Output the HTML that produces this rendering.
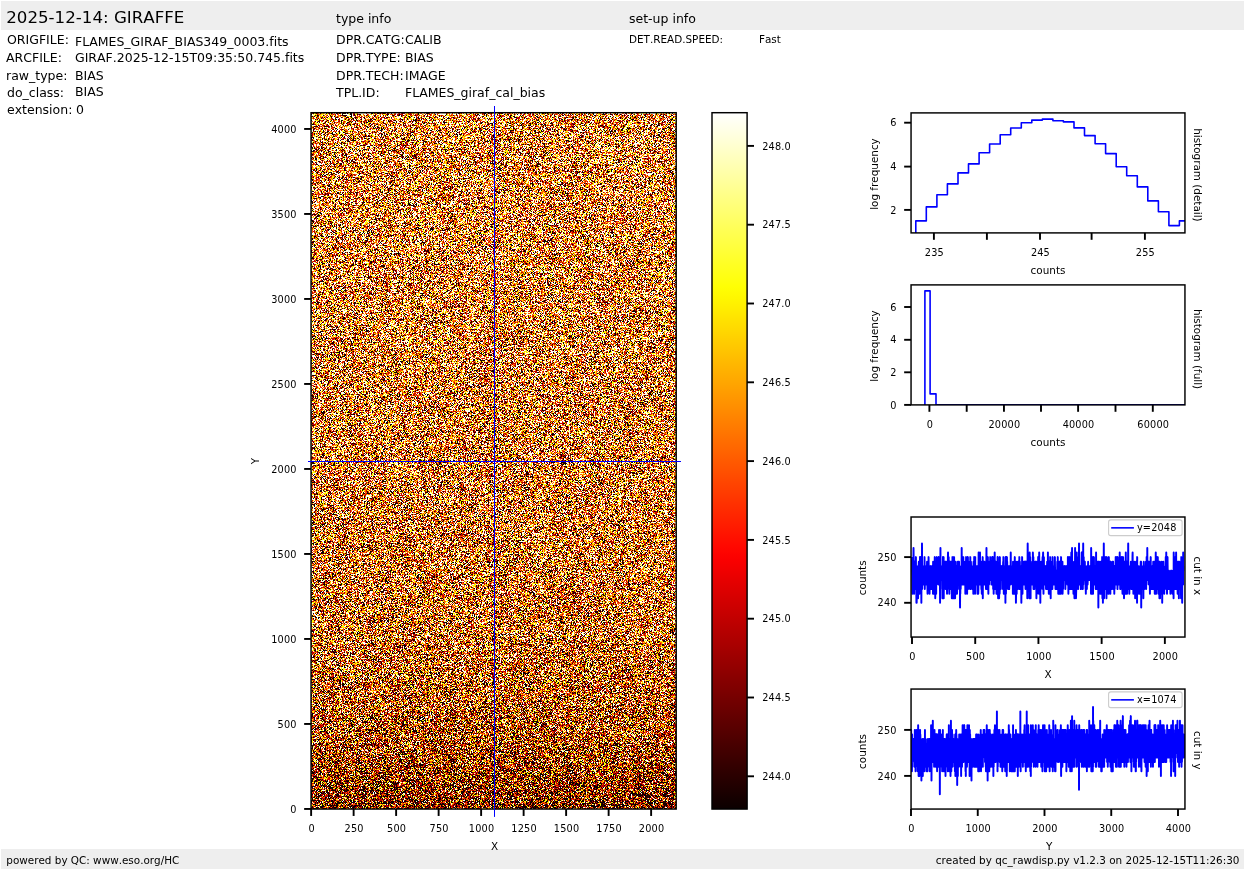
<!DOCTYPE html>
<html lang="en"><head><meta charset="utf-8"><title>2025-12-14: GIRAFFE</title>
<style>html,body{margin:0;padding:0;background:#fff}svg{display:block}text{font-family:'DejaVu Sans','Liberation Sans',sans-serif;fill:#000;white-space:pre;font-kerning:none;font-variant-ligatures:none}</style>
</head><body>
<svg width="1245" height="870" viewBox="0 0 1245 870">
<defs>
<filter id="noise" x="0" y="0" width="1" height="1" color-interpolation-filters="sRGB"><feTurbulence type="fractalNoise" baseFrequency="0.731 0.787" numOctaves="1" seed="11" result="t"/><feColorMatrix in="t" type="matrix" values="1 0 0 0 0  1 0 0 0 0  1 0 0 0 0  0 0 0 0 1" result="n"/><feComponentTransfer in="n" result="w"><feFuncR type="discrete" tableValues="0.593 0.869 0.439 0.582 0.473 0.653 0.582 0.744 0.516 0.248 0.263 0.769 0.643 0.455 0.318 0.328 0.259 0.319 0.104 0.33 0.081 0.582 0.625 0.744 0.438 0.443 0.365 0.306 0.476 1 0.153 0.741 0.582 0.081 0.869 0.439 0.73 0.582 0.634 0.473 0.259 0.624 0.428 0.744 0.443 0.565 0.611 0.052 0.439 0.33 0.105 0.438 0.104 0.655 0.104 0.416 0.365 0.259 0.611 0.831 0.548 0.428 0.624 0.604 0.729 0.582 0.337 0.054 0.223 0.566 0.403 0 0.654 0.109 0.629 0.674 0.626 0.766 0.437 0.481 0.641 0.751 0.613 0.644 0.453 0.363 0.484 0.732 0.632 0.414 0.499 0.794 0.41 0.38 0.42 0.092 0.488 0.737 0.478 0 0.333 0.883 0.525 0.069 0.425 0.806 0.2 0.658 0.65 0.342 0.255 0.504 0.162 0.84 0.779 0.667 0.558 0.459 0.859 0.68 0.235 0.577 0.299 0.599 0.712 0.532 0.922 0.245 0.371 1 0.35 0.724 0.182 0.701 0.467 0.133 0.512 0.54 0.758 0.397 0.277 0.447 0.821 0.69 0.033 0.432 0.621 0.214 0.358 0.607 0.39 0.267 0.551 0.314 0.59 0.637 0.569 0.492 0.585 0.52 0 0.406 0.322 0.546 0.985 0.148 0.747 0.496 0.441 0.959 0.327 0.308 0.288 0.261 0.284 0.475 0.472 0.386 0.616 0.517 0.383 0.292 0.564 0.742 0.744 0.417 0.249 0.318 0.329 0.74 0.439 0 0.362 0.338 0.593 0.625 0.439 0.402 0.63 0.536 0.646 0.769 0.412 0.382 0.325 0.548 0.153 0.604 0.79 0.643 0.749 0.113 0.153 0.655 0.582 0.471 0.378 0.104 0.104 0.33 0.384 0.582 0.338 0.439 0.582 0.113 1 0.582 0.604 1 0.113 0.662 0.153 0.516 0.416 0.221 0.582 0.655 0.548 0.734 0.33 0.672 0.646 0.439 0.79 0.382 0.744 0.655 0.207 0.221 0.483 0.306 0.056 0.869 0.471 0.611"/><feFuncG type="discrete" tableValues="0.593 0.869 0.439 0.582 0.473 0.653 0.582 0.744 0.516 0.248 0.263 0.769 0.643 0.455 0.318 0.328 0.259 0.319 0.104 0.33 0.081 0.582 0.625 0.744 0.438 0.443 0.365 0.306 0.476 1 0.153 0.741 0.582 0.081 0.869 0.439 0.73 0.582 0.634 0.473 0.259 0.624 0.428 0.744 0.443 0.565 0.611 0.052 0.439 0.33 0.105 0.438 0.104 0.655 0.104 0.416 0.365 0.259 0.611 0.831 0.548 0.428 0.624 0.604 0.729 0.582 0.337 0.054 0.223 0.566 0.403 0 0.654 0.109 0.629 0.674 0.626 0.766 0.437 0.481 0.641 0.751 0.613 0.644 0.453 0.363 0.484 0.732 0.632 0.414 0.499 0.794 0.41 0.38 0.42 0.092 0.488 0.737 0.478 0 0.333 0.883 0.525 0.069 0.425 0.806 0.2 0.658 0.65 0.342 0.255 0.504 0.162 0.84 0.779 0.667 0.558 0.459 0.859 0.68 0.235 0.577 0.299 0.599 0.712 0.532 0.922 0.245 0.371 1 0.35 0.724 0.182 0.701 0.467 0.133 0.512 0.54 0.758 0.397 0.277 0.447 0.821 0.69 0.033 0.432 0.621 0.214 0.358 0.607 0.39 0.267 0.551 0.314 0.59 0.637 0.569 0.492 0.585 0.52 0 0.406 0.322 0.546 0.985 0.148 0.747 0.496 0.441 0.959 0.327 0.308 0.288 0.261 0.284 0.475 0.472 0.386 0.616 0.517 0.383 0.292 0.564 0.742 0.744 0.417 0.249 0.318 0.329 0.74 0.439 0 0.362 0.338 0.593 0.625 0.439 0.402 0.63 0.536 0.646 0.769 0.412 0.382 0.325 0.548 0.153 0.604 0.79 0.643 0.749 0.113 0.153 0.655 0.582 0.471 0.378 0.104 0.104 0.33 0.384 0.582 0.338 0.439 0.582 0.113 1 0.582 0.604 1 0.113 0.662 0.153 0.516 0.416 0.221 0.582 0.655 0.548 0.734 0.33 0.672 0.646 0.439 0.79 0.382 0.744 0.655 0.207 0.221 0.483 0.306 0.056 0.869 0.471 0.611"/><feFuncB type="discrete" tableValues="0.593 0.869 0.439 0.582 0.473 0.653 0.582 0.744 0.516 0.248 0.263 0.769 0.643 0.455 0.318 0.328 0.259 0.319 0.104 0.33 0.081 0.582 0.625 0.744 0.438 0.443 0.365 0.306 0.476 1 0.153 0.741 0.582 0.081 0.869 0.439 0.73 0.582 0.634 0.473 0.259 0.624 0.428 0.744 0.443 0.565 0.611 0.052 0.439 0.33 0.105 0.438 0.104 0.655 0.104 0.416 0.365 0.259 0.611 0.831 0.548 0.428 0.624 0.604 0.729 0.582 0.337 0.054 0.223 0.566 0.403 0 0.654 0.109 0.629 0.674 0.626 0.766 0.437 0.481 0.641 0.751 0.613 0.644 0.453 0.363 0.484 0.732 0.632 0.414 0.499 0.794 0.41 0.38 0.42 0.092 0.488 0.737 0.478 0 0.333 0.883 0.525 0.069 0.425 0.806 0.2 0.658 0.65 0.342 0.255 0.504 0.162 0.84 0.779 0.667 0.558 0.459 0.859 0.68 0.235 0.577 0.299 0.599 0.712 0.532 0.922 0.245 0.371 1 0.35 0.724 0.182 0.701 0.467 0.133 0.512 0.54 0.758 0.397 0.277 0.447 0.821 0.69 0.033 0.432 0.621 0.214 0.358 0.607 0.39 0.267 0.551 0.314 0.59 0.637 0.569 0.492 0.585 0.52 0 0.406 0.322 0.546 0.985 0.148 0.747 0.496 0.441 0.959 0.327 0.308 0.288 0.261 0.284 0.475 0.472 0.386 0.616 0.517 0.383 0.292 0.564 0.742 0.744 0.417 0.249 0.318 0.329 0.74 0.439 0 0.362 0.338 0.593 0.625 0.439 0.402 0.63 0.536 0.646 0.769 0.412 0.382 0.325 0.548 0.153 0.604 0.79 0.643 0.749 0.113 0.153 0.655 0.582 0.471 0.378 0.104 0.104 0.33 0.384 0.582 0.338 0.439 0.582 0.113 1 0.582 0.604 1 0.113 0.662 0.153 0.516 0.416 0.221 0.582 0.655 0.548 0.734 0.33 0.672 0.646 0.439 0.79 0.382 0.744 0.655 0.207 0.221 0.483 0.306 0.056 0.869 0.471 0.611"/></feComponentTransfer><feComposite in="w" in2="SourceGraphic" operator="arithmetic" k1="0" k2="1" k3="1" k4="-0.5" result="v"/><feComponentTransfer><feFuncR type="discrete" tableValues="0.042 0.042 0.042 0.042 0.042 0.042 0.042 0.042 0.042 0.042 0.042 0.042 0.042 0.042 0.042 0.042 0.042 0.042 0.042 0.042 0.042 0.042 0.042 0.042 0.042 0.042 0.042 0.042 0.042 0.042 0.042 0.042 0.042 0.042 0.042 0.042 0.042 0.042 0.042 0.042 0.161 0.161 0.161 0.161 0.161 0.161 0.161 0.161 0.161 0.161 0.161 0.161 0.161 0.161 0.161 0.161 0.161 0.161 0.161 0.161 0.758 0.758 0.758 0.758 0.758 0.758 0.758 0.758 0.758 0.758 0.758 0.758 0.758 0.758 0.758 0.758 0.758 0.758 0.758 0.758 1 1 1 1 1 1 1 1 1 1 1 1 1 1 1 1 1 1 1 1 1 1 1 1 1 1 1 1 1 1 1 1 1 1 1 1 1 1 1 1 1 1 1 1 1 1 1 1 1 1 1 1 1 1 1 1 1 1 1 1 1 1 1 1 1 1 1 1 1 1 1 1 1 1 1 1 1 1 1 1 1 1 1 1 1 1 1 1 1 1 1 1 1 1 1 1 1 1 1 1"/><feFuncG type="discrete" tableValues="0 0 0 0 0 0 0 0 0 0 0 0 0 0 0 0 0 0 0 0 0 0 0 0 0 0 0 0 0 0 0 0 0 0 0 0 0 0 0 0 0 0 0 0 0 0 0 0 0 0 0 0 0 0 0 0 0 0 0 0 0 0 0 0 0 0 0 0 0 0 0 0 0 0 0 0 0 0 0 0 0.354 0.354 0.354 0.354 0.354 0.354 0.354 0.354 0.354 0.354 0.354 0.354 0.354 0.354 0.354 0.354 0.354 0.354 0.354 0.354 0.951 0.951 0.951 0.951 0.951 0.951 0.951 0.951 0.951 0.951 0.951 0.951 0.951 0.951 0.951 0.951 0.951 0.951 0.951 0.951 1 1 1 1 1 1 1 1 1 1 1 1 1 1 1 1 1 1 1 1 1 1 1 1 1 1 1 1 1 1 1 1 1 1 1 1 1 1 1 1 1 1 1 1 1 1 1 1 1 1 1 1 1 1 1 1 1 1 1 1"/><feFuncB type="discrete" tableValues="0 0 0 0 0 0 0 0 0 0 0 0 0 0 0 0 0 0 0 0 0 0 0 0 0 0 0 0 0 0 0 0 0 0 0 0 0 0 0 0 0 0 0 0 0 0 0 0 0 0 0 0 0 0 0 0 0 0 0 0 0 0 0 0 0 0 0 0 0 0 0 0 0 0 0 0 0 0 0 0 0 0 0 0 0 0 0 0 0 0 0 0 0 0 0 0 0 0 0 0 0 0 0 0 0 0 0 0 0 0 0 0 0 0 0 0 0 0 0 0 0.821 0.821 0.821 0.821 0.821 0.821 0.821 0.821 0.821 0.821 0.821 0.821 0.821 0.821 0.821 0.821 0.821 0.821 0.821 0.821 1 1 1 1 1 1 1 1 1 1 1 1 1 1 1 1 1 1 1 1 1 1 1 1 1 1 1 1 1 1 1 1 1 1 1 1 1 1 1 1"/></feComponentTransfer></filter>
<linearGradient id="hot" x1="0" y1="1" x2="0" y2="0"><stop offset="0.0000" stop-color="rgb(11,0,0)"/><stop offset="0.0156" stop-color="rgb(21,0,0)"/><stop offset="0.0312" stop-color="rgb(32,0,0)"/><stop offset="0.0469" stop-color="rgb(42,0,0)"/><stop offset="0.0625" stop-color="rgb(52,0,0)"/><stop offset="0.0781" stop-color="rgb(63,0,0)"/><stop offset="0.0938" stop-color="rgb(73,0,0)"/><stop offset="0.1094" stop-color="rgb(84,0,0)"/><stop offset="0.1250" stop-color="rgb(94,0,0)"/><stop offset="0.1406" stop-color="rgb(105,0,0)"/><stop offset="0.1562" stop-color="rgb(115,0,0)"/><stop offset="0.1719" stop-color="rgb(126,0,0)"/><stop offset="0.1875" stop-color="rgb(136,0,0)"/><stop offset="0.2031" stop-color="rgb(147,0,0)"/><stop offset="0.2188" stop-color="rgb(157,0,0)"/><stop offset="0.2344" stop-color="rgb(168,0,0)"/><stop offset="0.2500" stop-color="rgb(178,0,0)"/><stop offset="0.2656" stop-color="rgb(188,0,0)"/><stop offset="0.2812" stop-color="rgb(199,0,0)"/><stop offset="0.2969" stop-color="rgb(209,0,0)"/><stop offset="0.3125" stop-color="rgb(220,0,0)"/><stop offset="0.3281" stop-color="rgb(230,0,0)"/><stop offset="0.3438" stop-color="rgb(241,0,0)"/><stop offset="0.3594" stop-color="rgb(251,0,0)"/><stop offset="0.3750" stop-color="rgb(255,7,0)"/><stop offset="0.3906" stop-color="rgb(255,17,0)"/><stop offset="0.4062" stop-color="rgb(255,28,0)"/><stop offset="0.4219" stop-color="rgb(255,38,0)"/><stop offset="0.4375" stop-color="rgb(255,48,0)"/><stop offset="0.4531" stop-color="rgb(255,59,0)"/><stop offset="0.4688" stop-color="rgb(255,69,0)"/><stop offset="0.4844" stop-color="rgb(255,80,0)"/><stop offset="0.5000" stop-color="rgb(255,90,0)"/><stop offset="0.5156" stop-color="rgb(255,101,0)"/><stop offset="0.5312" stop-color="rgb(255,111,0)"/><stop offset="0.5469" stop-color="rgb(255,122,0)"/><stop offset="0.5625" stop-color="rgb(255,132,0)"/><stop offset="0.5781" stop-color="rgb(255,143,0)"/><stop offset="0.5938" stop-color="rgb(255,153,0)"/><stop offset="0.6094" stop-color="rgb(255,164,0)"/><stop offset="0.6250" stop-color="rgb(255,174,0)"/><stop offset="0.6406" stop-color="rgb(255,184,0)"/><stop offset="0.6562" stop-color="rgb(255,195,0)"/><stop offset="0.6719" stop-color="rgb(255,205,0)"/><stop offset="0.6875" stop-color="rgb(255,216,0)"/><stop offset="0.7031" stop-color="rgb(255,226,0)"/><stop offset="0.7188" stop-color="rgb(255,237,0)"/><stop offset="0.7344" stop-color="rgb(255,247,0)"/><stop offset="0.7500" stop-color="rgb(255,255,4)"/><stop offset="0.7656" stop-color="rgb(255,255,20)"/><stop offset="0.7812" stop-color="rgb(255,255,35)"/><stop offset="0.7969" stop-color="rgb(255,255,51)"/><stop offset="0.8125" stop-color="rgb(255,255,67)"/><stop offset="0.8281" stop-color="rgb(255,255,82)"/><stop offset="0.8438" stop-color="rgb(255,255,98)"/><stop offset="0.8594" stop-color="rgb(255,255,114)"/><stop offset="0.8750" stop-color="rgb(255,255,129)"/><stop offset="0.8906" stop-color="rgb(255,255,145)"/><stop offset="0.9062" stop-color="rgb(255,255,161)"/><stop offset="0.9219" stop-color="rgb(255,255,177)"/><stop offset="0.9375" stop-color="rgb(255,255,192)"/><stop offset="0.9531" stop-color="rgb(255,255,208)"/><stop offset="0.9688" stop-color="rgb(255,255,224)"/><stop offset="0.9844" stop-color="rgb(255,255,239)"/><stop offset="1.0000" stop-color="rgb(255,255,255)"/></linearGradient>
<linearGradient id="mugrad" x1="0" y1="0" x2="0" y2="1"><stop offset="0.0" stop-color="rgb(139,139,139)"/><stop offset="0.3" stop-color="rgb(136,136,136)"/><stop offset="0.6" stop-color="rgb(132,132,132)"/><stop offset="0.75" stop-color="rgb(128,128,128)"/><stop offset="0.83" stop-color="rgb(120,120,120)"/><stop offset="0.89" stop-color="rgb(113,113,113)"/><stop offset="0.94" stop-color="rgb(103,103,103)"/><stop offset="0.975" stop-color="rgb(92,92,92)"/><stop offset="1.0" stop-color="rgb(85,85,85)"/></linearGradient>
</defs>
<rect x="0" y="0" width="1245" height="870" fill="#fff"/>
<rect x="1" y="1" width="1243" height="29" fill="#eeeeee"/>
<rect x="1" y="849" width="1243" height="20" fill="#eeeeee"/>
<rect x="311" y="113" width="365" height="696" fill="url(#mugrad)" filter="url(#noise)"/>
<rect x="311.05" y="112.7" width="365.15" height="696.35" fill="none" stroke="#000" stroke-width="1.45"/>
<line x1="494.5" y1="106" x2="494.5" y2="816.9" stroke="#0000ff" stroke-width="1.0"/>
<line x1="308" y1="461.5" x2="681" y2="461.5" stroke="#0000ff" stroke-width="1.0"/>
<line x1="311.13" y1="809.05" x2="311.13" y2="815.9499999999999" stroke="#000" stroke-width="1.9"/>
<line x1="353.63" y1="809.05" x2="353.63" y2="815.9499999999999" stroke="#000" stroke-width="1.9"/>
<line x1="396.13" y1="809.05" x2="396.13" y2="815.9499999999999" stroke="#000" stroke-width="1.9"/>
<line x1="438.63" y1="809.05" x2="438.63" y2="815.9499999999999" stroke="#000" stroke-width="1.9"/>
<line x1="481.13" y1="809.05" x2="481.13" y2="815.9499999999999" stroke="#000" stroke-width="1.9"/>
<line x1="523.63" y1="809.05" x2="523.63" y2="815.9499999999999" stroke="#000" stroke-width="1.9"/>
<line x1="566.13" y1="809.05" x2="566.13" y2="815.9499999999999" stroke="#000" stroke-width="1.9"/>
<line x1="608.63" y1="809.05" x2="608.63" y2="815.9499999999999" stroke="#000" stroke-width="1.9"/>
<line x1="651.13" y1="809.05" x2="651.13" y2="815.9499999999999" stroke="#000" stroke-width="1.9"/>
<line x1="304.15000000000003" y1="808.96" x2="311.05" y2="808.96" stroke="#000" stroke-width="1.9"/>
<line x1="304.15000000000003" y1="723.96" x2="311.05" y2="723.96" stroke="#000" stroke-width="1.9"/>
<line x1="304.15000000000003" y1="638.96" x2="311.05" y2="638.96" stroke="#000" stroke-width="1.9"/>
<line x1="304.15000000000003" y1="553.96" x2="311.05" y2="553.96" stroke="#000" stroke-width="1.9"/>
<line x1="304.15000000000003" y1="468.96" x2="311.05" y2="468.96" stroke="#000" stroke-width="1.9"/>
<line x1="304.15000000000003" y1="383.96" x2="311.05" y2="383.96" stroke="#000" stroke-width="1.9"/>
<line x1="304.15000000000003" y1="298.96" x2="311.05" y2="298.96" stroke="#000" stroke-width="1.9"/>
<line x1="304.15000000000003" y1="213.96" x2="311.05" y2="213.96" stroke="#000" stroke-width="1.9"/>
<line x1="304.15000000000003" y1="128.96" x2="311.05" y2="128.96" stroke="#000" stroke-width="1.9"/>
<rect x="712.0" y="112.7" width="35.10" height="696.35" fill="url(#hot)"/>
<rect x="712.0" y="112.7" width="35.1" height="696.35" fill="none" stroke="#000" stroke-width="1.45"/>
<line x1="747.1" y1="145.90" x2="754.0" y2="145.90" stroke="#000" stroke-width="1.9"/>
<line x1="747.1" y1="224.70" x2="754.0" y2="224.70" stroke="#000" stroke-width="1.9"/>
<line x1="747.1" y1="303.50" x2="754.0" y2="303.50" stroke="#000" stroke-width="1.9"/>
<line x1="747.1" y1="382.30" x2="754.0" y2="382.30" stroke="#000" stroke-width="1.9"/>
<line x1="747.1" y1="461.10" x2="754.0" y2="461.10" stroke="#000" stroke-width="1.9"/>
<line x1="747.1" y1="539.90" x2="754.0" y2="539.90" stroke="#000" stroke-width="1.9"/>
<line x1="747.1" y1="618.70" x2="754.0" y2="618.70" stroke="#000" stroke-width="1.9"/>
<line x1="747.1" y1="697.50" x2="754.0" y2="697.50" stroke="#000" stroke-width="1.9"/>
<line x1="747.1" y1="776.30" x2="754.0" y2="776.30" stroke="#000" stroke-width="1.9"/>
<clipPath id="c1"><rect x="911.05" y="112.9" width="273.90" height="120.00"/></clipPath>
<path d="M915.8 237.9V220.9H926.3V206.9H936.9V194.8H947.4V183.9H958.0V172.9H968.5V163.9H979.1V152.8H989.6V144.0H1000.2V134.8H1010.7V128.0H1021.3V122.7H1031.8V120.1H1042.4V119.1H1052.9V120.8H1063.4V121.9H1074.0V127.9H1084.5V135.6H1095.1V143.8H1105.6V153.6H1116.2V166.8H1126.7V175.8H1137.3V186.9H1147.8V200.9H1158.4V211.7H1168.9V225.6H1179.4V220.9H1190.0H1189.95" fill="none" stroke="#0000ff" stroke-width="1.6" stroke-linejoin="round" clip-path="url(#c1)"/>
<rect x="911.05" y="112.9" width="273.9" height="120.0" fill="none" stroke="#000" stroke-width="1.45"/>
<line x1="933.90" y1="232.9" x2="933.90" y2="239.8" stroke="#000" stroke-width="1.9"/>
<line x1="986.90" y1="232.9" x2="986.90" y2="239.8" stroke="#000" stroke-width="1.9"/>
<line x1="1040.00" y1="232.9" x2="1040.00" y2="239.8" stroke="#000" stroke-width="1.9"/>
<line x1="1091.60" y1="232.9" x2="1091.60" y2="239.8" stroke="#000" stroke-width="1.9"/>
<line x1="1144.90" y1="232.9" x2="1144.90" y2="239.8" stroke="#000" stroke-width="1.9"/>
<line x1="904.15" y1="122.70" x2="911.05" y2="122.70" stroke="#000" stroke-width="1.9"/>
<line x1="904.15" y1="166.60" x2="911.05" y2="166.60" stroke="#000" stroke-width="1.9"/>
<line x1="904.15" y1="209.90" x2="911.05" y2="209.90" stroke="#000" stroke-width="1.9"/>
<clipPath id="c2"><rect x="911.05" y="284.9" width="273.90" height="120.00"/></clipPath>
<path d="M924.9 404.9V290.9H930.1V393.9H936.0V404.9H1184.95" fill="none" stroke="#0000ff" stroke-width="1.6" stroke-linejoin="round" clip-path="url(#c2)"/>
<rect x="911.05" y="284.9" width="273.9" height="120.0" fill="none" stroke="#000" stroke-width="1.45"/>
<line x1="929.40" y1="404.9" x2="929.40" y2="411.79999999999995" stroke="#000" stroke-width="1.9"/>
<line x1="966.70" y1="404.9" x2="966.70" y2="411.79999999999995" stroke="#000" stroke-width="1.9"/>
<line x1="1003.95" y1="404.9" x2="1003.95" y2="411.79999999999995" stroke="#000" stroke-width="1.9"/>
<line x1="1041.00" y1="404.9" x2="1041.00" y2="411.79999999999995" stroke="#000" stroke-width="1.9"/>
<line x1="1078.10" y1="404.9" x2="1078.10" y2="411.79999999999995" stroke="#000" stroke-width="1.9"/>
<line x1="1115.50" y1="404.9" x2="1115.50" y2="411.79999999999995" stroke="#000" stroke-width="1.9"/>
<line x1="1152.80" y1="404.9" x2="1152.80" y2="411.79999999999995" stroke="#000" stroke-width="1.9"/>
<line x1="904.15" y1="307.00" x2="911.05" y2="307.00" stroke="#000" stroke-width="1.9"/>
<line x1="904.15" y1="339.80" x2="911.05" y2="339.80" stroke="#000" stroke-width="1.9"/>
<line x1="904.15" y1="372.30" x2="911.05" y2="372.30" stroke="#000" stroke-width="1.9"/>
<line x1="904.15" y1="404.90" x2="911.05" y2="404.90" stroke="#000" stroke-width="1.9"/>
<clipPath id="c3"><rect x="911.05" y="517.0" width="273.90" height="120.05"/></clipPath>
<polyline points="912.00,557.1 912.13,570.8 912.25,575.4 912.38,593.7 912.51,580.0 912.63,580.0 912.76,575.4 912.89,584.5 913.01,575.4 913.14,580.0 913.26,589.1 913.39,566.2 913.52,548.0 913.64,557.1 913.77,575.4 913.90,580.0 914.02,580.0 914.15,593.7 914.28,566.2 914.40,589.1 914.53,589.1 914.66,580.0 914.78,561.7 914.91,575.4 915.03,589.1 915.16,584.5 915.29,570.8 915.41,580.0 915.54,584.5 915.67,580.0 915.79,570.8 915.92,557.1 916.05,589.1 916.17,584.5 916.30,584.5 916.43,602.8 916.55,584.5 916.68,602.8 916.80,566.2 916.93,580.0 917.06,593.7 917.18,570.8 917.31,580.0 917.44,593.7 917.56,584.5 917.69,584.5 917.82,584.5 917.94,575.4 918.07,598.2 918.20,580.0 918.32,566.2 918.45,566.2 918.57,566.2 918.70,566.2 918.83,561.7 918.95,589.1 919.08,566.2 919.21,593.7 919.33,584.5 919.46,593.7 919.59,566.2 919.71,561.7 919.84,580.0 919.97,557.1 920.09,584.5 920.22,575.4 920.34,575.4 920.47,589.1 920.60,570.8 920.72,557.1 920.85,589.1 920.98,566.2 921.10,580.0 921.23,557.1 921.36,602.8 921.48,570.8 921.61,570.8 921.74,575.4 921.86,589.1 921.99,543.4 922.11,589.1 922.24,575.4 922.37,570.8 922.49,584.5 922.62,575.4 922.75,566.2 922.87,575.4 923.00,584.5 923.13,584.5 923.25,584.5 923.38,584.5 923.51,580.0 923.63,584.5 923.76,570.8 923.88,584.5 924.01,575.4 924.14,570.8 924.26,584.5 924.39,580.0 924.52,557.1 924.64,566.2 924.77,589.1 924.90,575.4 925.02,570.8 925.15,566.2 925.28,575.4 925.40,580.0 925.53,584.5 925.65,570.8 925.78,575.4 925.91,580.0 926.03,580.0 926.16,580.0 926.29,570.8 926.41,584.5 926.54,570.8 926.67,566.2 926.79,570.8 926.92,584.5 927.05,561.7 927.17,584.5 927.30,570.8 927.42,584.5 927.55,593.7 927.68,575.4 927.80,575.4 927.93,575.4 928.06,575.4 928.18,584.5 928.31,584.5 928.44,580.0 928.56,557.1 928.69,566.2 928.82,580.0 928.94,570.8 929.07,580.0 929.19,580.0 929.32,566.2 929.45,580.0 929.57,593.7 929.70,584.5 929.83,575.4 929.95,575.4 930.08,566.2 930.21,584.5 930.33,570.8 930.46,570.8 930.59,580.0 930.71,566.2 930.84,570.8 930.96,584.5 931.09,566.2 931.22,589.1 931.34,575.4 931.47,575.4 931.60,570.8 931.72,584.5 931.85,575.4 931.98,580.0 932.10,566.2 932.23,584.5 932.36,575.4 932.48,580.0 932.61,589.1 932.73,580.0 932.86,575.4 932.99,593.7 933.11,561.7 933.24,589.1 933.37,570.8 933.49,566.2 933.62,584.5 933.75,580.0 933.87,580.0 934.00,580.0 934.13,593.7 934.25,589.1 934.38,580.0 934.50,566.2 934.63,570.8 934.76,557.1 934.88,570.8 935.01,580.0 935.14,580.0 935.26,598.2 935.39,584.5 935.52,584.5 935.64,575.4 935.77,570.8 935.90,580.0 936.02,584.5 936.15,593.7 936.27,580.0 936.40,575.4 936.53,570.8 936.65,584.5 936.78,557.1 936.91,566.2 937.03,575.4 937.16,580.0 937.29,580.0 937.41,575.4 937.54,575.4 937.67,570.8 937.79,570.8 937.92,561.7 938.04,566.2 938.17,575.4 938.30,570.8 938.42,580.0 938.55,584.5 938.68,557.1 938.80,580.0 938.93,557.1 939.06,580.0 939.18,575.4 939.31,566.2 939.44,575.4 939.56,570.8 939.69,580.0 939.81,580.0 939.94,580.0 940.07,602.8 940.19,561.7 940.32,580.0 940.45,548.0 940.57,580.0 940.70,575.4 940.83,570.8 940.95,580.0 941.08,566.2 941.21,570.8 941.33,580.0 941.46,570.8 941.58,575.4 941.71,575.4 941.84,575.4 941.96,580.0 942.09,575.4 942.22,589.1 942.34,580.0 942.47,598.2 942.60,566.2 942.72,570.8 942.85,566.2 942.98,557.1 943.10,570.8 943.23,557.1 943.35,566.2 943.48,575.4 943.61,557.1 943.73,598.2 943.86,580.0 943.99,575.4 944.11,584.5 944.24,580.0 944.37,584.5 944.49,584.5 944.62,570.8 944.75,570.8 944.87,575.4 945.00,561.7 945.12,580.0 945.25,566.2 945.38,570.8 945.50,561.7 945.63,589.1 945.76,570.8 945.88,575.4 946.01,589.1 946.14,566.2 946.26,584.5 946.39,561.7 946.52,570.8 946.64,570.8 946.77,575.4 946.89,566.2 947.02,593.7 947.15,575.4 947.27,584.5 947.40,575.4 947.53,575.4 947.65,570.8 947.78,584.5 947.91,557.1 948.03,552.5 948.16,580.0 948.29,575.4 948.41,575.4 948.54,561.7 948.66,557.1 948.79,589.1 948.92,584.5 949.04,589.1 949.17,589.1 949.30,593.7 949.42,570.8 949.55,589.1 949.68,561.7 949.80,566.2 949.93,584.5 950.06,584.5 950.18,584.5 950.31,561.7 950.43,584.5 950.56,589.1 950.69,575.4 950.81,570.8 950.94,584.5 951.07,561.7 951.19,575.4 951.32,570.8 951.45,584.5 951.57,575.4 951.70,580.0 951.83,598.2 951.95,575.4 952.08,593.7 952.20,575.4 952.33,589.1 952.46,557.1 952.58,570.8 952.71,566.2 952.84,566.2 952.96,589.1 953.09,598.2 953.22,580.0 953.34,566.2 953.47,575.4 953.60,566.2 953.72,566.2 953.85,589.1 953.97,575.4 954.10,557.1 954.23,580.0 954.35,598.2 954.48,580.0 954.61,580.0 954.73,570.8 954.86,584.5 954.99,575.4 955.11,598.2 955.24,566.2 955.37,561.7 955.49,561.7 955.62,593.7 955.74,570.8 955.87,593.7 956.00,575.4 956.12,575.4 956.25,584.5 956.38,570.8 956.50,575.4 956.63,566.2 956.76,575.4 956.88,575.4 957.01,593.7 957.14,589.1 957.26,580.0 957.39,575.4 957.51,575.4 957.64,561.7 957.77,584.5 957.89,580.0 958.02,575.4 958.15,580.0 958.27,570.8 958.40,580.0 958.53,561.7 958.65,580.0 958.78,566.2 958.91,575.4 959.03,561.7 959.16,589.1 959.28,570.8 959.41,580.0 959.54,575.4 959.66,566.2 959.79,589.1 959.92,589.1 960.04,607.4 960.17,575.4 960.30,593.7 960.42,575.4 960.55,589.1 960.68,589.1 960.80,580.0 960.93,570.8 961.05,584.5 961.18,580.0 961.31,575.4 961.43,580.0 961.56,570.8 961.69,548.0 961.81,575.4 961.94,566.2 962.07,557.1 962.19,570.8 962.32,575.4 962.45,584.5 962.57,575.4 962.70,566.2 962.82,561.7 962.95,584.5 963.08,575.4 963.20,566.2 963.33,557.1 963.46,575.4 963.58,580.0 963.71,584.5 963.84,580.0 963.96,584.5 964.09,566.2 964.22,566.2 964.34,570.8 964.47,566.2 964.59,580.0 964.72,570.8 964.85,580.0 964.97,575.4 965.10,561.7 965.23,575.4 965.35,593.7 965.48,580.0 965.61,584.5 965.73,589.1 965.86,584.5 965.99,566.2 966.11,557.1 966.24,580.0 966.36,566.2 966.49,566.2 966.62,589.1 966.74,575.4 966.87,575.4 967.00,575.4 967.12,593.7 967.25,580.0 967.38,566.2 967.50,561.7 967.63,557.1 967.76,580.0 967.88,557.1 968.01,570.8 968.13,589.1 968.26,566.2 968.39,580.0 968.51,570.8 968.64,575.4 968.77,561.7 968.89,575.4 969.02,580.0 969.15,566.2 969.27,575.4 969.40,580.0 969.53,561.7 969.65,580.0 969.78,584.5 969.90,580.0 970.03,589.1 970.16,580.0 970.28,557.1 970.41,584.5 970.54,575.4 970.66,589.1 970.79,580.0 970.92,561.7 971.04,566.2 971.17,580.0 971.30,575.4 971.42,584.5 971.55,584.5 971.67,584.5 971.80,584.5 971.93,570.8 972.05,570.8 972.18,570.8 972.31,575.4 972.43,589.1 972.56,575.4 972.69,584.5 972.81,566.2 972.94,570.8 973.07,566.2 973.19,580.0 973.32,593.7 973.44,566.2 973.57,561.7 973.70,589.1 973.82,575.4 973.95,561.7 974.08,584.5 974.20,557.1 974.33,580.0 974.46,584.5 974.58,561.7 974.71,570.8 974.84,584.5 974.96,566.2 975.09,593.7 975.22,557.1 975.34,584.5 975.47,570.8 975.59,580.0 975.72,570.8 975.85,566.2 975.97,584.5 976.10,566.2 976.23,580.0 976.35,584.5 976.48,580.0 976.61,584.5 976.73,584.5 976.86,566.2 976.99,575.4 977.11,566.2 977.24,570.8 977.36,584.5 977.49,593.7 977.62,584.5 977.74,570.8 977.87,575.4 978.00,584.5 978.12,566.2 978.25,593.7 978.38,589.1 978.50,575.4 978.63,552.5 978.76,570.8 978.88,584.5 979.01,570.8 979.13,570.8 979.26,566.2 979.39,580.0 979.51,584.5 979.64,575.4 979.77,570.8 979.89,561.7 980.02,552.5 980.15,584.5 980.27,580.0 980.40,575.4 980.53,580.0 980.65,570.8 980.78,570.8 980.90,570.8 981.03,561.7 981.16,575.4 981.28,584.5 981.41,589.1 981.54,584.5 981.66,584.5 981.79,593.7 981.92,570.8 982.04,575.4 982.17,580.0 982.30,584.5 982.42,593.7 982.55,584.5 982.67,557.1 982.80,598.2 982.93,575.4 983.05,566.2 983.18,575.4 983.31,580.0 983.43,566.2 983.56,584.5 983.69,570.8 983.81,561.7 983.94,584.5 984.07,584.5 984.19,575.4 984.32,566.2 984.44,561.7 984.57,570.8 984.70,580.0 984.82,584.5 984.95,570.8 985.08,570.8 985.20,584.5 985.33,575.4 985.46,570.8 985.58,566.2 985.71,584.5 985.84,570.8 985.96,589.1 986.09,580.0 986.21,575.4 986.34,561.7 986.47,548.0 986.59,570.8 986.72,570.8 986.85,566.2 986.97,589.1 987.10,566.2 987.23,589.1 987.35,557.1 987.48,561.7 987.61,570.8 987.73,584.5 987.86,557.1 987.98,570.8 988.11,575.4 988.24,570.8 988.36,593.7 988.49,570.8 988.62,566.2 988.74,570.8 988.87,575.4 989.00,584.5 989.12,570.8 989.25,575.4 989.38,575.4 989.50,580.0 989.63,566.2 989.75,561.7 989.88,570.8 990.01,566.2 990.13,561.7 990.26,557.1 990.39,570.8 990.51,575.4 990.64,580.0 990.77,575.4 990.89,570.8 991.02,566.2 991.15,580.0 991.27,575.4 991.40,584.5 991.52,561.7 991.65,580.0 991.78,570.8 991.90,584.5 992.03,580.0 992.16,580.0 992.28,557.1 992.41,570.8 992.54,575.4 992.66,584.5 992.79,580.0 992.92,570.8 993.04,557.1 993.17,589.1 993.29,584.5 993.42,575.4 993.55,580.0 993.67,593.7 993.80,575.4 993.93,566.2 994.05,589.1 994.18,570.8 994.31,566.2 994.43,566.2 994.56,580.0 994.69,552.5 994.81,570.8 994.94,584.5 995.06,566.2 995.19,584.5 995.32,566.2 995.44,589.1 995.57,566.2 995.70,580.0 995.82,561.7 995.95,566.2 996.08,570.8 996.20,575.4 996.33,566.2 996.46,593.7 996.58,570.8 996.71,570.8 996.83,570.8 996.96,566.2 997.09,575.4 997.21,575.4 997.34,566.2 997.47,575.4 997.59,557.1 997.72,593.7 997.85,557.1 997.97,580.0 998.10,598.2 998.23,584.5 998.35,575.4 998.48,575.4 998.60,575.4 998.73,566.2 998.86,575.4 998.98,575.4 999.11,598.2 999.24,570.8 999.36,566.2 999.49,580.0 999.62,593.7 999.74,589.1 999.87,557.1 1000.00,580.0 1000.12,580.0 1000.25,584.5 1000.37,566.2 1000.50,580.0 1000.63,584.5 1000.75,589.1 1000.88,575.4 1001.01,566.2 1001.13,575.4 1001.26,566.2 1001.39,575.4 1001.51,575.4 1001.64,575.4 1001.77,575.4 1001.89,566.2 1002.02,570.8 1002.14,580.0 1002.27,575.4 1002.40,575.4 1002.52,570.8 1002.65,575.4 1002.78,570.8 1002.90,589.1 1003.03,570.8 1003.16,561.7 1003.28,589.1 1003.41,557.1 1003.54,570.8 1003.66,575.4 1003.79,593.7 1003.91,566.2 1004.04,584.5 1004.17,580.0 1004.29,570.8 1004.42,584.5 1004.55,584.5 1004.67,584.5 1004.80,575.4 1004.93,570.8 1005.05,570.8 1005.18,570.8 1005.31,580.0 1005.43,602.8 1005.56,580.0 1005.68,557.1 1005.81,570.8 1005.94,593.7 1006.06,584.5 1006.19,557.1 1006.32,589.1 1006.44,580.0 1006.57,570.8 1006.70,584.5 1006.82,566.2 1006.95,557.1 1007.08,584.5 1007.20,561.7 1007.33,584.5 1007.45,584.5 1007.58,570.8 1007.71,570.8 1007.83,580.0 1007.96,566.2 1008.09,589.1 1008.21,584.5 1008.34,584.5 1008.47,566.2 1008.59,566.2 1008.72,566.2 1008.85,589.1 1008.97,575.4 1009.10,570.8 1009.22,589.1 1009.35,584.5 1009.48,566.2 1009.60,566.2 1009.73,570.8 1009.86,570.8 1009.98,570.8 1010.11,575.4 1010.24,575.4 1010.36,584.5 1010.49,575.4 1010.62,580.0 1010.74,552.5 1010.87,570.8 1010.99,575.4 1011.12,575.4 1011.25,575.4 1011.37,575.4 1011.50,570.8 1011.63,575.4 1011.75,566.2 1011.88,580.0 1012.01,570.8 1012.13,566.2 1012.26,584.5 1012.39,570.8 1012.51,570.8 1012.64,580.0 1012.76,580.0 1012.89,593.7 1013.02,561.7 1013.14,584.5 1013.27,589.1 1013.40,566.2 1013.52,593.7 1013.65,566.2 1013.78,570.8 1013.90,570.8 1014.03,575.4 1014.16,589.1 1014.28,593.7 1014.41,561.7 1014.53,580.0 1014.66,580.0 1014.79,557.1 1014.91,580.0 1015.04,575.4 1015.17,575.4 1015.29,575.4 1015.42,584.5 1015.55,580.0 1015.67,561.7 1015.80,566.2 1015.93,602.8 1016.05,593.7 1016.18,570.8 1016.30,575.4 1016.43,580.0 1016.56,566.2 1016.68,593.7 1016.81,561.7 1016.94,575.4 1017.06,570.8 1017.19,570.8 1017.32,566.2 1017.44,575.4 1017.57,580.0 1017.70,566.2 1017.82,570.8 1017.95,589.1 1018.07,561.7 1018.20,561.7 1018.33,561.7 1018.45,575.4 1018.58,570.8 1018.71,580.0 1018.83,584.5 1018.96,575.4 1019.09,570.8 1019.21,580.0 1019.34,557.1 1019.47,589.1 1019.59,584.5 1019.72,580.0 1019.84,561.7 1019.97,575.4 1020.10,580.0 1020.22,584.5 1020.35,584.5 1020.48,589.1 1020.60,566.2 1020.73,566.2 1020.86,566.2 1020.98,580.0 1021.11,575.4 1021.24,584.5 1021.36,602.8 1021.49,575.4 1021.61,575.4 1021.74,566.2 1021.87,584.5 1021.99,570.8 1022.12,557.1 1022.25,584.5 1022.37,580.0 1022.50,593.7 1022.63,570.8 1022.75,566.2 1022.88,566.2 1023.01,566.2 1023.13,561.7 1023.26,575.4 1023.38,566.2 1023.51,584.5 1023.64,584.5 1023.76,570.8 1023.89,584.5 1024.02,570.8 1024.14,561.7 1024.27,570.8 1024.40,580.0 1024.52,580.0 1024.65,561.7 1024.78,584.5 1024.90,575.4 1025.03,575.4 1025.15,575.4 1025.28,561.7 1025.41,580.0 1025.53,589.1 1025.66,561.7 1025.79,570.8 1025.91,566.2 1026.04,575.4 1026.17,566.2 1026.29,561.7 1026.42,561.7 1026.55,575.4 1026.67,580.0 1026.80,570.8 1026.92,570.8 1027.05,570.8 1027.18,580.0 1027.30,598.2 1027.43,570.8 1027.56,566.2 1027.68,543.4 1027.81,557.1 1027.94,566.2 1028.06,580.0 1028.19,566.2 1028.32,575.4 1028.44,561.7 1028.57,570.8 1028.69,570.8 1028.82,570.8 1028.95,575.4 1029.07,589.1 1029.20,575.4 1029.33,598.2 1029.45,570.8 1029.58,566.2 1029.71,552.5 1029.83,570.8 1029.96,580.0 1030.09,589.1 1030.21,557.1 1030.34,589.1 1030.46,566.2 1030.59,598.2 1030.72,575.4 1030.84,566.2 1030.97,570.8 1031.10,575.4 1031.22,584.5 1031.35,584.5 1031.48,566.2 1031.60,570.8 1031.73,575.4 1031.86,570.8 1031.98,584.5 1032.11,566.2 1032.23,561.7 1032.36,584.5 1032.49,575.4 1032.61,561.7 1032.74,580.0 1032.87,552.5 1032.99,557.1 1033.12,575.4 1033.25,566.2 1033.37,557.1 1033.50,589.1 1033.63,566.2 1033.75,575.4 1033.88,575.4 1034.00,566.2 1034.13,580.0 1034.26,589.1 1034.38,589.1 1034.51,575.4 1034.64,566.2 1034.76,575.4 1034.89,575.4 1035.02,575.4 1035.14,561.7 1035.27,570.8 1035.40,580.0 1035.52,575.4 1035.65,561.7 1035.77,580.0 1035.90,580.0 1036.03,575.4 1036.15,584.5 1036.28,566.2 1036.41,598.2 1036.53,561.7 1036.66,580.0 1036.79,589.1 1036.91,570.8 1037.04,593.7 1037.17,570.8 1037.29,566.2 1037.42,580.0 1037.54,580.0 1037.67,566.2 1037.80,580.0 1037.92,575.4 1038.05,570.8 1038.18,557.1 1038.30,580.0 1038.43,575.4 1038.56,561.7 1038.68,575.4 1038.81,575.4 1038.94,593.7 1039.06,593.7 1039.19,552.5 1039.32,570.8 1039.44,561.7 1039.57,575.4 1039.69,570.8 1039.82,580.0 1039.95,580.0 1040.07,575.4 1040.20,570.8 1040.33,602.8 1040.45,575.4 1040.58,570.8 1040.71,575.4 1040.83,570.8 1040.96,589.1 1041.09,561.7 1041.21,580.0 1041.34,575.4 1041.46,575.4 1041.59,566.2 1041.72,570.8 1041.84,575.4 1041.97,570.8 1042.10,570.8 1042.22,566.2 1042.35,570.8 1042.48,561.7 1042.60,557.1 1042.73,566.2 1042.86,589.1 1042.98,557.1 1043.11,552.5 1043.23,580.0 1043.36,580.0 1043.49,593.7 1043.61,566.2 1043.74,584.5 1043.87,557.1 1043.99,570.8 1044.12,575.4 1044.25,566.2 1044.37,580.0 1044.50,584.5 1044.63,570.8 1044.75,580.0 1044.88,580.0 1045.00,575.4 1045.13,580.0 1045.26,575.4 1045.38,566.2 1045.51,580.0 1045.64,570.8 1045.76,580.0 1045.89,566.2 1046.02,589.1 1046.14,566.2 1046.27,566.2 1046.40,584.5 1046.52,589.1 1046.65,566.2 1046.77,570.8 1046.90,589.1 1047.03,580.0 1047.15,561.7 1047.28,575.4 1047.41,570.8 1047.53,589.1 1047.66,589.1 1047.79,570.8 1047.91,552.5 1048.04,580.0 1048.17,566.2 1048.29,584.5 1048.42,561.7 1048.54,580.0 1048.67,580.0 1048.80,593.7 1048.92,580.0 1049.05,570.8 1049.18,561.7 1049.30,584.5 1049.43,566.2 1049.56,580.0 1049.68,575.4 1049.81,584.5 1049.94,593.7 1050.06,589.1 1050.19,557.1 1050.31,584.5 1050.44,580.0 1050.57,561.7 1050.69,598.2 1050.82,570.8 1050.95,580.0 1051.07,570.8 1051.20,566.2 1051.33,575.4 1051.45,575.4 1051.58,566.2 1051.71,566.2 1051.83,580.0 1051.96,575.4 1052.08,589.1 1052.21,561.7 1052.34,589.1 1052.46,570.8 1052.59,557.1 1052.72,566.2 1052.84,580.0 1052.97,580.0 1053.10,580.0 1053.22,566.2 1053.35,570.8 1053.48,575.4 1053.60,566.2 1053.73,584.5 1053.85,580.0 1053.98,580.0 1054.11,570.8 1054.23,570.8 1054.36,575.4 1054.49,566.2 1054.61,570.8 1054.74,575.4 1054.87,557.1 1054.99,566.2 1055.12,584.5 1055.25,580.0 1055.37,575.4 1055.50,589.1 1055.62,584.5 1055.75,575.4 1055.88,580.0 1056.00,570.8 1056.13,584.5 1056.26,575.4 1056.38,584.5 1056.51,580.0 1056.64,570.8 1056.76,575.4 1056.89,589.1 1057.02,575.4 1057.14,575.4 1057.27,561.7 1057.39,575.4 1057.52,580.0 1057.65,589.1 1057.77,557.1 1057.90,584.5 1058.03,584.5 1058.15,575.4 1058.28,593.7 1058.41,566.2 1058.53,575.4 1058.66,570.8 1058.79,584.5 1058.91,580.0 1059.04,566.2 1059.16,566.2 1059.29,570.8 1059.42,561.7 1059.54,593.7 1059.67,575.4 1059.80,580.0 1059.92,561.7 1060.05,575.4 1060.18,570.8 1060.30,580.0 1060.43,570.8 1060.56,561.7 1060.68,580.0 1060.81,593.7 1060.93,584.5 1061.06,557.1 1061.19,570.8 1061.31,580.0 1061.44,584.5 1061.57,566.2 1061.69,570.8 1061.82,575.4 1061.95,580.0 1062.07,575.4 1062.20,580.0 1062.33,570.8 1062.45,561.7 1062.58,593.7 1062.70,589.1 1062.83,575.4 1062.96,575.4 1063.08,589.1 1063.21,580.0 1063.34,580.0 1063.46,580.0 1063.59,580.0 1063.72,575.4 1063.84,566.2 1063.97,566.2 1064.10,570.8 1064.22,570.8 1064.35,580.0 1064.47,580.0 1064.60,566.2 1064.73,575.4 1064.85,566.2 1064.98,570.8 1065.11,575.4 1065.23,570.8 1065.36,589.1 1065.49,575.4 1065.61,580.0 1065.74,566.2 1065.87,580.0 1065.99,570.8 1066.12,580.0 1066.24,570.8 1066.37,566.2 1066.50,575.4 1066.62,575.4 1066.75,575.4 1066.88,566.2 1067.00,580.0 1067.13,575.4 1067.26,580.0 1067.38,584.5 1067.51,575.4 1067.64,570.8 1067.76,584.5 1067.89,557.1 1068.01,584.5 1068.14,566.2 1068.27,570.8 1068.39,593.7 1068.52,575.4 1068.65,589.1 1068.77,575.4 1068.90,566.2 1069.03,557.1 1069.15,566.2 1069.28,589.1 1069.41,580.0 1069.53,561.7 1069.66,575.4 1069.78,557.1 1069.91,584.5 1070.04,580.0 1070.16,589.1 1070.29,580.0 1070.42,561.7 1070.54,584.5 1070.67,566.2 1070.80,570.8 1070.92,566.2 1071.05,580.0 1071.18,575.4 1071.30,552.5 1071.43,589.1 1071.55,566.2 1071.68,561.7 1071.81,570.8 1071.93,557.1 1072.06,548.0 1072.19,580.0 1072.31,589.1 1072.44,580.0 1072.57,575.4 1072.69,570.8 1072.82,584.5 1072.95,566.2 1073.07,589.1 1073.20,566.2 1073.32,580.0 1073.45,593.7 1073.58,593.7 1073.70,593.7 1073.83,584.5 1073.96,575.4 1074.08,561.7 1074.21,566.2 1074.34,589.1 1074.46,598.2 1074.59,580.0 1074.72,589.1 1074.84,575.4 1074.97,584.5 1075.09,548.0 1075.22,593.7 1075.35,570.8 1075.47,557.1 1075.60,580.0 1075.73,584.5 1075.85,557.1 1075.98,598.2 1076.11,593.7 1076.23,589.1 1076.36,570.8 1076.49,566.2 1076.61,575.4 1076.74,552.5 1076.86,580.0 1076.99,575.4 1077.12,580.0 1077.24,561.7 1077.37,575.4 1077.50,580.0 1077.62,557.1 1077.75,561.7 1077.88,566.2 1078.00,589.1 1078.13,584.5 1078.26,580.0 1078.38,580.0 1078.51,580.0 1078.63,575.4 1078.76,570.8 1078.89,584.5 1079.01,543.4 1079.14,580.0 1079.27,580.0 1079.39,580.0 1079.52,566.2 1079.65,570.8 1079.77,584.5 1079.90,570.8 1080.03,575.4 1080.15,570.8 1080.28,575.4 1080.40,566.2 1080.53,570.8 1080.66,584.5 1080.78,589.1 1080.91,589.1 1081.04,570.8 1081.16,580.0 1081.29,580.0 1081.42,575.4 1081.54,561.7 1081.67,552.5 1081.80,575.4 1081.92,552.5 1082.05,570.8 1082.17,561.7 1082.30,575.4 1082.43,589.1 1082.55,570.8 1082.68,561.7 1082.81,589.1 1082.93,575.4 1083.06,570.8 1083.19,543.4 1083.31,584.5 1083.44,580.0 1083.57,566.2 1083.69,557.1 1083.82,575.4 1083.94,566.2 1084.07,570.8 1084.20,570.8 1084.32,580.0 1084.45,575.4 1084.58,580.0 1084.70,575.4 1084.83,561.7 1084.96,570.8 1085.08,566.2 1085.21,580.0 1085.34,566.2 1085.46,580.0 1085.59,589.1 1085.71,580.0 1085.84,593.7 1085.97,570.8 1086.09,570.8 1086.22,584.5 1086.35,575.4 1086.47,589.1 1086.60,584.5 1086.73,580.0 1086.85,589.1 1086.98,566.2 1087.11,580.0 1087.23,566.2 1087.36,575.4 1087.48,570.8 1087.61,584.5 1087.74,580.0 1087.86,580.0 1087.99,570.8 1088.12,561.7 1088.24,580.0 1088.37,575.4 1088.50,570.8 1088.62,566.2 1088.75,575.4 1088.88,580.0 1089.00,580.0 1089.13,575.4 1089.25,570.8 1089.38,580.0 1089.51,580.0 1089.63,566.2 1089.76,575.4 1089.89,580.0 1090.01,566.2 1090.14,566.2 1090.27,566.2 1090.39,566.2 1090.52,580.0 1090.65,570.8 1090.77,570.8 1090.90,575.4 1091.02,593.7 1091.15,548.0 1091.28,570.8 1091.40,570.8 1091.53,575.4 1091.66,575.4 1091.78,593.7 1091.91,589.1 1092.04,584.5 1092.16,575.4 1092.29,557.1 1092.42,557.1 1092.54,584.5 1092.67,566.2 1092.79,561.7 1092.92,580.0 1093.05,593.7 1093.17,561.7 1093.30,580.0 1093.43,580.0 1093.55,557.1 1093.68,570.8 1093.81,566.2 1093.93,557.1 1094.06,575.4 1094.19,584.5 1094.31,566.2 1094.44,575.4 1094.56,566.2 1094.69,570.8 1094.82,580.0 1094.94,575.4 1095.07,580.0 1095.20,575.4 1095.32,575.4 1095.45,570.8 1095.58,570.8 1095.70,589.1 1095.83,566.2 1095.96,589.1 1096.08,552.5 1096.21,580.0 1096.33,575.4 1096.46,561.7 1096.59,575.4 1096.71,589.1 1096.84,589.1 1096.97,570.8 1097.09,570.8 1097.22,566.2 1097.35,570.8 1097.47,580.0 1097.60,570.8 1097.73,561.7 1097.85,584.5 1097.98,580.0 1098.10,580.0 1098.23,561.7 1098.36,607.4 1098.48,566.2 1098.61,570.8 1098.74,566.2 1098.86,561.7 1098.99,580.0 1099.12,570.8 1099.24,580.0 1099.37,580.0 1099.50,575.4 1099.62,570.8 1099.75,570.8 1099.87,580.0 1100.00,561.7 1100.13,593.7 1100.25,584.5 1100.38,589.1 1100.51,575.4 1100.63,580.0 1100.76,570.8 1100.89,584.5 1101.01,561.7 1101.14,566.2 1101.27,580.0 1101.39,593.7 1101.52,584.5 1101.64,589.1 1101.77,561.7 1101.90,566.2 1102.02,589.1 1102.15,557.1 1102.28,580.0 1102.40,598.2 1102.53,561.7 1102.66,561.7 1102.78,575.4 1102.91,602.8 1103.04,561.7 1103.16,580.0 1103.29,575.4 1103.42,570.8 1103.54,570.8 1103.67,580.0 1103.79,543.4 1103.92,566.2 1104.05,598.2 1104.17,570.8 1104.30,570.8 1104.43,570.8 1104.55,580.0 1104.68,570.8 1104.81,566.2 1104.93,584.5 1105.06,575.4 1105.19,570.8 1105.31,589.1 1105.44,584.5 1105.56,557.1 1105.69,566.2 1105.82,584.5 1105.94,566.2 1106.07,570.8 1106.20,561.7 1106.32,561.7 1106.45,598.2 1106.58,580.0 1106.70,561.7 1106.83,557.1 1106.96,580.0 1107.08,589.1 1107.21,570.8 1107.33,580.0 1107.46,575.4 1107.59,584.5 1107.71,566.2 1107.84,570.8 1107.97,570.8 1108.09,584.5 1108.22,593.7 1108.35,589.1 1108.47,570.8 1108.60,593.7 1108.73,566.2 1108.85,557.1 1108.98,580.0 1109.10,575.4 1109.23,566.2 1109.36,566.2 1109.48,580.0 1109.61,575.4 1109.74,575.4 1109.86,575.4 1109.99,570.8 1110.12,570.8 1110.24,561.7 1110.37,593.7 1110.50,561.7 1110.62,566.2 1110.75,575.4 1110.87,570.8 1111.00,566.2 1111.13,570.8 1111.25,575.4 1111.38,570.8 1111.51,580.0 1111.63,589.1 1111.76,584.5 1111.89,584.5 1112.01,570.8 1112.14,566.2 1112.27,570.8 1112.39,561.7 1112.52,575.4 1112.64,580.0 1112.77,584.5 1112.90,584.5 1113.02,580.0 1113.15,561.7 1113.28,589.1 1113.40,570.8 1113.53,575.4 1113.66,566.2 1113.78,580.0 1113.91,566.2 1114.04,580.0 1114.16,566.2 1114.29,593.7 1114.41,570.8 1114.54,566.2 1114.67,589.1 1114.79,566.2 1114.92,584.5 1115.05,566.2 1115.17,575.4 1115.30,566.2 1115.43,570.8 1115.55,584.5 1115.68,557.1 1115.81,561.7 1115.93,584.5 1116.06,570.8 1116.18,570.8 1116.31,580.0 1116.44,584.5 1116.56,561.7 1116.69,580.0 1116.82,566.2 1116.94,557.1 1117.07,570.8 1117.20,584.5 1117.32,566.2 1117.45,589.1 1117.58,584.5 1117.70,557.1 1117.83,584.5 1117.95,570.8 1118.08,584.5 1118.21,575.4 1118.33,570.8 1118.46,570.8 1118.59,580.0 1118.71,566.2 1118.84,566.2 1118.97,570.8 1119.09,584.5 1119.22,570.8 1119.35,580.0 1119.47,584.5 1119.60,575.4 1119.72,552.5 1119.85,584.5 1119.98,566.2 1120.10,570.8 1120.23,589.1 1120.36,584.5 1120.48,575.4 1120.61,580.0 1120.74,570.8 1120.86,584.5 1120.99,584.5 1121.12,566.2 1121.24,575.4 1121.37,584.5 1121.49,575.4 1121.62,557.1 1121.75,580.0 1121.87,589.1 1122.00,566.2 1122.13,557.1 1122.25,561.7 1122.38,589.1 1122.51,593.7 1122.63,561.7 1122.76,575.4 1122.89,570.8 1123.01,575.4 1123.14,557.1 1123.26,575.4 1123.39,580.0 1123.52,575.4 1123.64,589.1 1123.77,575.4 1123.90,575.4 1124.02,598.2 1124.15,584.5 1124.28,589.1 1124.40,589.1 1124.53,570.8 1124.66,561.7 1124.78,570.8 1124.91,589.1 1125.03,593.7 1125.16,566.2 1125.29,580.0 1125.41,575.4 1125.54,589.1 1125.67,593.7 1125.79,552.5 1125.92,580.0 1126.05,575.4 1126.17,589.1 1126.30,561.7 1126.43,580.0 1126.55,575.4 1126.68,575.4 1126.80,575.4 1126.93,561.7 1127.06,593.7 1127.18,570.8 1127.31,580.0 1127.44,580.0 1127.56,580.0 1127.69,570.8 1127.82,589.1 1127.94,580.0 1128.07,570.8 1128.20,543.4 1128.32,580.0 1128.45,570.8 1128.57,575.4 1128.70,580.0 1128.83,575.4 1128.95,584.5 1129.08,566.2 1129.21,589.1 1129.33,593.7 1129.46,570.8 1129.59,589.1 1129.71,584.5 1129.84,580.0 1129.97,570.8 1130.09,580.0 1130.22,580.0 1130.34,580.0 1130.47,570.8 1130.60,580.0 1130.72,575.4 1130.85,561.7 1130.98,580.0 1131.10,580.0 1131.23,584.5 1131.36,584.5 1131.48,589.1 1131.61,589.1 1131.74,580.0 1131.86,570.8 1131.99,570.8 1132.11,580.0 1132.24,570.8 1132.37,589.1 1132.49,557.1 1132.62,552.5 1132.75,575.4 1132.87,570.8 1133.00,575.4 1133.13,566.2 1133.25,584.5 1133.38,593.7 1133.51,566.2 1133.63,589.1 1133.76,570.8 1133.88,584.5 1134.01,584.5 1134.14,566.2 1134.26,561.7 1134.39,580.0 1134.52,580.0 1134.64,575.4 1134.77,580.0 1134.90,593.7 1135.02,575.4 1135.15,598.2 1135.28,570.8 1135.40,580.0 1135.53,575.4 1135.65,589.1 1135.78,584.5 1135.91,570.8 1136.03,561.7 1136.16,566.2 1136.29,570.8 1136.41,589.1 1136.54,570.8 1136.67,575.4 1136.79,580.0 1136.92,561.7 1137.05,602.8 1137.17,557.1 1137.30,584.5 1137.42,584.5 1137.55,575.4 1137.68,589.1 1137.80,580.0 1137.93,575.4 1138.06,593.7 1138.18,584.5 1138.31,589.1 1138.44,580.0 1138.56,566.2 1138.69,580.0 1138.82,580.0 1138.94,575.4 1139.07,589.1 1139.19,575.4 1139.32,580.0 1139.45,584.5 1139.57,593.7 1139.70,584.5 1139.83,566.2 1139.95,566.2 1140.08,580.0 1140.21,575.4 1140.33,580.0 1140.46,589.1 1140.59,593.7 1140.71,561.7 1140.84,584.5 1140.96,575.4 1141.09,561.7 1141.22,607.4 1141.34,580.0 1141.47,575.4 1141.60,580.0 1141.72,575.4 1141.85,580.0 1141.98,566.2 1142.10,570.8 1142.23,589.1 1142.36,589.1 1142.48,584.5 1142.61,584.5 1142.73,584.5 1142.86,566.2 1142.99,584.5 1143.11,580.0 1143.24,575.4 1143.37,598.2 1143.49,570.8 1143.62,570.8 1143.75,561.7 1143.87,584.5 1144.00,580.0 1144.13,575.4 1144.25,580.0 1144.38,589.1 1144.50,566.2 1144.63,580.0 1144.76,570.8 1144.88,584.5 1145.01,566.2 1145.14,580.0 1145.26,584.5 1145.39,566.2 1145.52,566.2 1145.64,584.5 1145.77,566.2 1145.90,561.7 1146.02,575.4 1146.15,589.1 1146.27,570.8 1146.40,566.2 1146.53,584.5 1146.65,557.1 1146.78,580.0 1146.91,575.4 1147.03,566.2 1147.16,575.4 1147.29,548.0 1147.41,575.4 1147.54,570.8 1147.67,575.4 1147.79,575.4 1147.92,570.8 1148.04,570.8 1148.17,580.0 1148.30,566.2 1148.42,575.4 1148.55,561.7 1148.68,570.8 1148.80,575.4 1148.93,584.5 1149.06,575.4 1149.18,561.7 1149.31,575.4 1149.44,566.2 1149.56,575.4 1149.69,580.0 1149.81,584.5 1149.94,593.7 1150.07,570.8 1150.19,575.4 1150.32,575.4 1150.45,566.2 1150.57,584.5 1150.70,557.1 1150.83,589.1 1150.95,575.4 1151.08,589.1 1151.21,580.0 1151.33,566.2 1151.46,589.1 1151.58,575.4 1151.71,575.4 1151.84,575.4 1151.96,575.4 1152.09,566.2 1152.22,570.8 1152.34,570.8 1152.47,566.2 1152.60,570.8 1152.72,575.4 1152.85,589.1 1152.98,566.2 1153.10,580.0 1153.23,561.7 1153.35,580.0 1153.48,589.1 1153.61,566.2 1153.73,584.5 1153.86,589.1 1153.99,566.2 1154.11,589.1 1154.24,561.7 1154.37,584.5 1154.49,570.8 1154.62,575.4 1154.75,593.7 1154.87,575.4 1155.00,580.0 1155.12,575.4 1155.25,570.8 1155.38,561.7 1155.50,580.0 1155.63,575.4 1155.76,552.5 1155.88,570.8 1156.01,570.8 1156.14,593.7 1156.26,589.1 1156.39,580.0 1156.52,580.0 1156.64,570.8 1156.77,557.1 1156.89,589.1 1157.02,580.0 1157.15,570.8 1157.27,575.4 1157.40,566.2 1157.53,580.0 1157.65,584.5 1157.78,557.1 1157.91,570.8 1158.03,589.1 1158.16,580.0 1158.29,575.4 1158.41,593.7 1158.54,570.8 1158.66,575.4 1158.79,580.0 1158.92,584.5 1159.04,561.7 1159.17,575.4 1159.30,584.5 1159.42,598.2 1159.55,589.1 1159.68,570.8 1159.80,561.7 1159.93,589.1 1160.06,598.2 1160.18,575.4 1160.31,575.4 1160.43,566.2 1160.56,584.5 1160.69,575.4 1160.81,593.7 1160.94,589.1 1161.07,580.0 1161.19,580.0 1161.32,570.8 1161.45,566.2 1161.57,589.1 1161.70,561.7 1161.83,584.5 1161.95,580.0 1162.08,566.2 1162.20,602.8 1162.33,589.1 1162.46,584.5 1162.58,575.4 1162.71,566.2 1162.84,566.2 1162.96,584.5 1163.09,570.8 1163.22,580.0 1163.34,561.7 1163.47,580.0 1163.60,566.2 1163.72,589.1 1163.85,570.8 1163.97,589.1 1164.10,575.4 1164.23,593.7 1164.35,580.0 1164.48,584.5 1164.61,584.5 1164.73,575.4 1164.86,570.8 1164.99,575.4 1165.11,575.4 1165.24,570.8 1165.37,566.2 1165.49,566.2 1165.62,570.8 1165.75,557.1 1165.87,580.0 1166.00,566.2 1166.12,589.1 1166.25,552.5 1166.38,580.0 1166.50,575.4 1166.63,561.7 1166.76,580.0 1166.88,584.5 1167.01,593.7 1167.14,580.0 1167.26,557.1 1167.39,575.4 1167.52,557.1 1167.64,566.2 1167.77,580.0 1167.89,589.1 1168.02,580.0 1168.15,570.8 1168.27,580.0 1168.40,575.4 1168.53,570.8 1168.65,580.0 1168.78,589.1 1168.91,580.0 1169.03,570.8 1169.16,584.5 1169.29,589.1 1169.41,589.1 1169.54,580.0 1169.66,580.0 1169.79,575.4 1169.92,589.1 1170.04,575.4 1170.17,584.5 1170.30,584.5 1170.42,593.7 1170.55,589.1 1170.68,584.5 1170.80,575.4 1170.93,570.8 1171.06,575.4 1171.18,575.4 1171.31,589.1 1171.43,570.8 1171.56,570.8 1171.69,570.8 1171.81,580.0 1171.94,580.0 1172.07,580.0 1172.19,589.1 1172.32,580.0 1172.45,593.7 1172.57,593.7 1172.70,570.8 1172.83,570.8 1172.95,570.8 1173.08,580.0 1173.20,575.4 1173.33,570.8 1173.46,580.0 1173.58,598.2 1173.71,552.5 1173.84,566.2 1173.96,566.2 1174.09,575.4 1174.22,584.5 1174.34,575.4 1174.47,575.4 1174.60,589.1 1174.72,580.0 1174.85,570.8 1174.97,561.7 1175.10,570.8 1175.23,580.0 1175.35,589.1 1175.48,557.1 1175.61,575.4 1175.73,570.8 1175.86,575.4 1175.99,589.1 1176.11,552.5 1176.24,570.8 1176.37,566.2 1176.49,584.5 1176.62,575.4 1176.74,561.7 1176.87,580.0 1177.00,584.5 1177.12,589.1 1177.25,589.1 1177.38,566.2 1177.50,575.4 1177.63,593.7 1177.76,561.7 1177.88,561.7 1178.01,566.2 1178.14,593.7 1178.26,575.4 1178.39,561.7 1178.51,589.1 1178.64,584.5 1178.77,580.0 1178.89,598.2 1179.02,575.4 1179.15,566.2 1179.27,570.8 1179.40,561.7 1179.53,575.4 1179.65,575.4 1179.78,580.0 1179.91,584.5 1180.03,589.1 1180.16,584.5 1180.28,575.4 1180.41,580.0 1180.54,575.4 1180.66,575.4 1180.79,570.8 1180.92,580.0 1181.04,598.2 1181.17,584.5 1181.30,557.1 1181.42,570.8 1181.55,580.0 1181.68,580.0 1181.80,575.4 1181.93,580.0 1182.05,575.4 1182.18,602.8 1182.31,566.2 1182.43,580.0 1182.56,580.0 1182.69,580.0 1182.81,575.4 1182.94,566.2 1183.07,584.5 1183.19,552.5 1183.32,570.8 1183.45,566.2" fill="none" stroke="#0000ff" stroke-width="1.95" stroke-linejoin="round" clip-path="url(#c3)"/>
<rect x="911.05" y="517.0" width="273.9" height="120.05" fill="none" stroke="#000" stroke-width="1.45"/>
<line x1="912.00" y1="637.05" x2="912.00" y2="643.9499999999999" stroke="#000" stroke-width="1.9"/>
<line x1="975.22" y1="637.05" x2="975.22" y2="643.9499999999999" stroke="#000" stroke-width="1.9"/>
<line x1="1038.43" y1="637.05" x2="1038.43" y2="643.9499999999999" stroke="#000" stroke-width="1.9"/>
<line x1="1101.64" y1="637.05" x2="1101.64" y2="643.9499999999999" stroke="#000" stroke-width="1.9"/>
<line x1="1164.86" y1="637.05" x2="1164.86" y2="643.9499999999999" stroke="#000" stroke-width="1.9"/>
<line x1="904.15" y1="557.10" x2="911.05" y2="557.10" stroke="#000" stroke-width="1.9"/>
<line x1="904.15" y1="602.80" x2="911.05" y2="602.80" stroke="#000" stroke-width="1.9"/>
<rect x="1108.6" y="519.9" width="73.5" height="15.7" rx="2.2" ry="2.2" fill="#fff" fill-opacity="0.8" stroke="#ccc" stroke-width="1.1"/>
<line x1="1111.1999999999998" y1="527.85" x2="1133.8999999999999" y2="527.85" stroke="#0000ff" stroke-width="1.6"/>
<clipPath id="c4"><rect x="911.05" y="689.05" width="273.90" height="120.00"/></clipPath>
<polyline points="911.00,748.3 911.07,757.5 911.13,729.9 911.20,757.5 911.27,752.9 911.33,739.1 911.40,762.1 911.47,757.5 911.53,752.9 911.60,757.5 911.67,766.7 911.73,752.9 911.80,757.5 911.87,748.3 911.93,771.3 912.00,762.1 912.07,739.1 912.13,734.5 912.20,766.7 912.27,748.3 912.34,762.1 912.40,762.1 912.47,762.1 912.54,757.5 912.60,743.7 912.67,743.7 912.74,752.9 912.80,757.5 912.87,752.9 912.94,752.9 913.00,743.7 913.07,757.5 913.14,752.9 913.20,752.9 913.27,752.9 913.34,748.3 913.40,752.9 913.47,739.1 913.54,752.9 913.60,739.1 913.67,757.5 913.74,757.5 913.80,752.9 913.87,748.3 913.94,748.3 914.00,739.1 914.07,739.1 914.14,748.3 914.20,757.5 914.27,752.9 914.34,739.1 914.40,748.3 914.47,766.7 914.54,757.5 914.60,757.5 914.67,739.1 914.74,752.9 914.80,729.9 914.87,748.3 914.94,752.9 915.00,757.5 915.07,743.7 915.14,752.9 915.21,762.1 915.27,748.3 915.34,752.9 915.41,739.1 915.47,752.9 915.54,771.3 915.61,743.7 915.67,771.3 915.74,739.1 915.81,734.5 915.87,757.5 915.94,766.7 916.01,766.7 916.07,743.7 916.14,752.9 916.21,757.5 916.27,752.9 916.34,729.9 916.41,748.3 916.47,743.7 916.54,743.7 916.61,743.7 916.67,743.7 916.74,762.1 916.81,752.9 916.87,762.1 916.94,762.1 917.01,739.1 917.07,757.5 917.14,752.9 917.21,757.5 917.27,757.5 917.34,743.7 917.41,757.5 917.47,757.5 917.54,748.3 917.61,748.3 917.67,743.7 917.74,752.9 917.81,771.3 917.88,748.3 917.94,748.3 918.01,743.7 918.08,762.1 918.14,725.3 918.21,766.7 918.28,743.7 918.34,752.9 918.41,757.5 918.48,743.7 918.54,757.5 918.61,775.9 918.68,766.7 918.74,748.3 918.81,729.9 918.88,766.7 918.94,752.9 919.01,739.1 919.08,748.3 919.14,757.5 919.21,766.7 919.28,771.3 919.34,762.1 919.41,757.5 919.48,775.9 919.54,771.3 919.61,748.3 919.68,757.5 919.74,762.1 919.81,757.5 919.88,762.1 919.94,743.7 920.01,734.5 920.08,729.9 920.14,743.7 920.21,743.7 920.28,739.1 920.35,734.5 920.41,739.1 920.48,739.1 920.55,757.5 920.61,766.7 920.68,743.7 920.75,752.9 920.81,752.9 920.88,762.1 920.95,766.7 921.01,739.1 921.08,748.3 921.15,762.1 921.21,748.3 921.28,748.3 921.35,748.3 921.41,780.5 921.48,752.9 921.55,766.7 921.61,752.9 921.68,757.5 921.75,748.3 921.81,748.3 921.88,748.3 921.95,757.5 922.01,748.3 922.08,757.5 922.15,748.3 922.21,757.5 922.28,762.1 922.35,748.3 922.41,757.5 922.48,739.1 922.55,748.3 922.61,748.3 922.68,752.9 922.75,752.9 922.81,775.9 922.88,739.1 922.95,762.1 923.01,743.7 923.08,757.5 923.15,752.9 923.22,752.9 923.28,762.1 923.35,752.9 923.42,748.3 923.48,757.5 923.55,766.7 923.62,757.5 923.68,748.3 923.75,739.1 923.82,743.7 923.88,748.3 923.95,762.1 924.02,743.7 924.08,752.9 924.15,752.9 924.22,743.7 924.28,748.3 924.35,748.3 924.42,762.1 924.48,757.5 924.55,771.3 924.62,748.3 924.68,752.9 924.75,743.7 924.82,748.3 924.88,757.5 924.95,729.9 925.02,762.1 925.08,766.7 925.15,757.5 925.22,748.3 925.28,757.5 925.35,757.5 925.42,762.1 925.48,739.1 925.55,757.5 925.62,762.1 925.68,752.9 925.75,762.1 925.82,752.9 925.89,739.1 925.95,757.5 926.02,752.9 926.09,757.5 926.15,752.9 926.22,743.7 926.29,748.3 926.35,757.5 926.42,762.1 926.49,752.9 926.55,743.7 926.62,752.9 926.69,752.9 926.75,771.3 926.82,743.7 926.89,766.7 926.95,766.7 927.02,757.5 927.09,752.9 927.15,752.9 927.22,762.1 927.29,757.5 927.35,757.5 927.42,771.3 927.49,752.9 927.55,757.5 927.62,748.3 927.69,752.9 927.75,743.7 927.82,743.7 927.89,743.7 927.95,739.1 928.02,743.7 928.09,752.9 928.15,739.1 928.22,762.1 928.29,752.9 928.36,743.7 928.42,757.5 928.49,743.7 928.56,762.1 928.62,757.5 928.69,748.3 928.76,743.7 928.82,739.1 928.89,752.9 928.96,748.3 929.02,743.7 929.09,748.3 929.16,766.7 929.22,757.5 929.29,739.1 929.36,766.7 929.42,743.7 929.49,757.5 929.56,743.7 929.62,762.1 929.69,752.9 929.76,771.3 929.82,752.9 929.89,739.1 929.96,766.7 930.02,739.1 930.09,757.5 930.16,752.9 930.22,739.1 930.29,739.1 930.36,762.1 930.42,757.5 930.49,766.7 930.56,762.1 930.62,739.1 930.69,757.5 930.76,743.7 930.82,752.9 930.89,748.3 930.96,757.5 931.02,748.3 931.09,725.3 931.16,743.7 931.23,748.3 931.29,757.5 931.36,743.7 931.43,739.1 931.49,780.5 931.56,766.7 931.63,729.9 931.69,748.3 931.76,752.9 931.83,748.3 931.89,739.1 931.96,743.7 932.03,752.9 932.09,729.9 932.16,752.9 932.23,762.1 932.29,757.5 932.36,752.9 932.43,757.5 932.49,752.9 932.56,748.3 932.63,739.1 932.69,762.1 932.76,743.7 932.83,720.7 932.89,757.5 932.96,757.5 933.03,739.1 933.09,752.9 933.16,757.5 933.23,734.5 933.29,757.5 933.36,743.7 933.43,752.9 933.49,752.9 933.56,762.1 933.63,762.1 933.70,739.1 933.76,762.1 933.83,748.3 933.90,762.1 933.96,752.9 934.03,752.9 934.10,766.7 934.16,739.1 934.23,752.9 934.30,739.1 934.36,762.1 934.43,743.7 934.50,729.9 934.56,748.3 934.63,757.5 934.70,748.3 934.76,752.9 934.83,752.9 934.90,752.9 934.96,757.5 935.03,748.3 935.10,757.5 935.16,762.1 935.23,743.7 935.30,752.9 935.36,748.3 935.43,752.9 935.50,757.5 935.56,757.5 935.63,748.3 935.70,757.5 935.76,766.7 935.83,734.5 935.90,766.7 935.96,734.5 936.03,752.9 936.10,762.1 936.16,734.5 936.23,752.9 936.30,762.1 936.37,752.9 936.43,739.1 936.50,743.7 936.57,743.7 936.63,734.5 936.70,748.3 936.77,748.3 936.83,752.9 936.90,766.7 936.97,752.9 937.03,734.5 937.10,771.3 937.17,739.1 937.23,748.3 937.30,762.1 937.37,752.9 937.43,734.5 937.50,757.5 937.57,743.7 937.63,739.1 937.70,762.1 937.77,743.7 937.83,748.3 937.90,757.5 937.97,743.7 938.03,757.5 938.10,757.5 938.17,766.7 938.23,748.3 938.30,757.5 938.37,757.5 938.43,762.1 938.50,766.7 938.57,762.1 938.63,743.7 938.70,762.1 938.77,739.1 938.83,748.3 938.90,748.3 938.97,762.1 939.03,729.9 939.10,766.7 939.17,748.3 939.24,734.5 939.30,752.9 939.37,757.5 939.44,752.9 939.50,743.7 939.57,739.1 939.64,743.7 939.70,762.1 939.77,757.5 939.84,794.3 939.90,766.7 939.97,752.9 940.04,729.9 940.10,762.1 940.17,739.1 940.24,762.1 940.30,752.9 940.37,752.9 940.44,766.7 940.50,752.9 940.57,739.1 940.64,743.7 940.70,743.7 940.77,757.5 940.84,752.9 940.90,748.3 940.97,743.7 941.04,739.1 941.10,762.1 941.17,734.5 941.24,752.9 941.30,752.9 941.37,762.1 941.44,752.9 941.50,752.9 941.57,762.1 941.64,752.9 941.71,748.3 941.77,757.5 941.84,743.7 941.91,762.1 941.97,743.7 942.04,752.9 942.11,748.3 942.17,771.3 942.24,748.3 942.31,752.9 942.37,743.7 942.44,762.1 942.51,739.1 942.57,762.1 942.64,739.1 942.71,743.7 942.77,757.5 942.84,729.9 942.91,762.1 942.97,752.9 943.04,748.3 943.11,743.7 943.17,748.3 943.24,743.7 943.31,748.3 943.37,752.9 943.44,762.1 943.51,752.9 943.57,743.7 943.64,762.1 943.71,748.3 943.77,771.3 943.84,757.5 943.91,766.7 943.97,739.1 944.04,771.3 944.11,752.9 944.17,743.7 944.24,743.7 944.31,743.7 944.38,739.1 944.44,748.3 944.51,743.7 944.58,752.9 944.64,752.9 944.71,766.7 944.78,748.3 944.84,739.1 944.91,757.5 944.98,762.1 945.04,748.3 945.11,739.1 945.18,739.1 945.24,766.7 945.31,748.3 945.38,757.5 945.44,748.3 945.51,775.9 945.58,743.7 945.64,752.9 945.71,748.3 945.78,752.9 945.84,762.1 945.91,743.7 945.98,757.5 946.04,757.5 946.11,743.7 946.18,752.9 946.24,757.5 946.31,739.1 946.38,757.5 946.44,752.9 946.51,743.7 946.58,739.1 946.64,739.1 946.71,734.5 946.78,748.3 946.84,757.5 946.91,734.5 946.98,734.5 947.04,752.9 947.11,743.7 947.18,752.9 947.25,766.7 947.31,739.1 947.38,748.3 947.45,748.3 947.51,734.5 947.58,734.5 947.65,757.5 947.71,762.1 947.78,771.3 947.85,748.3 947.91,752.9 947.98,748.3 948.05,748.3 948.11,757.5 948.18,752.9 948.25,766.7 948.31,739.1 948.38,757.5 948.45,743.7 948.51,757.5 948.58,748.3 948.65,743.7 948.71,752.9 948.78,757.5 948.85,725.3 948.91,752.9 948.98,743.7 949.05,752.9 949.11,757.5 949.18,739.1 949.25,748.3 949.31,748.3 949.38,771.3 949.45,748.3 949.51,743.7 949.58,748.3 949.65,752.9 949.72,739.1 949.78,748.3 949.85,743.7 949.92,739.1 949.98,739.1 950.05,762.1 950.12,748.3 950.18,757.5 950.25,771.3 950.32,748.3 950.38,766.7 950.45,752.9 950.52,775.9 950.58,762.1 950.65,752.9 950.72,748.3 950.78,757.5 950.85,757.5 950.92,720.7 950.98,734.5 951.05,752.9 951.12,752.9 951.18,729.9 951.25,766.7 951.32,771.3 951.38,762.1 951.45,752.9 951.52,762.1 951.58,748.3 951.65,752.9 951.72,766.7 951.78,748.3 951.85,766.7 951.92,743.7 951.98,748.3 952.05,729.9 952.12,743.7 952.18,752.9 952.25,748.3 952.32,748.3 952.38,757.5 952.45,766.7 952.52,739.1 952.59,734.5 952.65,752.9 952.72,752.9 952.79,752.9 952.85,739.1 952.92,739.1 952.99,757.5 953.05,752.9 953.12,757.5 953.19,748.3 953.25,743.7 953.32,739.1 953.39,752.9 953.45,762.1 953.52,743.7 953.59,743.7 953.65,752.9 953.72,748.3 953.79,748.3 953.85,739.1 953.92,748.3 953.99,743.7 954.05,748.3 954.12,762.1 954.19,743.7 954.25,748.3 954.32,739.1 954.39,762.1 954.45,757.5 954.52,748.3 954.59,766.7 954.65,752.9 954.72,752.9 954.79,752.9 954.85,752.9 954.92,771.3 954.99,748.3 955.05,748.3 955.12,739.1 955.19,734.5 955.26,748.3 955.32,739.1 955.39,775.9 955.46,743.7 955.52,739.1 955.59,739.1 955.66,748.3 955.72,752.9 955.79,752.9 955.86,748.3 955.92,743.7 955.99,743.7 956.06,752.9 956.12,762.1 956.19,729.9 956.26,757.5 956.32,766.7 956.39,734.5 956.46,739.1 956.52,748.3 956.59,739.1 956.66,743.7 956.72,757.5 956.79,748.3 956.86,762.1 956.92,757.5 956.99,757.5 957.06,748.3 957.12,739.1 957.19,785.1 957.26,743.7 957.32,771.3 957.39,762.1 957.46,743.7 957.52,739.1 957.59,739.1 957.66,739.1 957.73,766.7 957.79,757.5 957.86,775.9 957.93,752.9 957.99,748.3 958.06,752.9 958.13,757.5 958.19,743.7 958.26,743.7 958.33,748.3 958.39,757.5 958.46,748.3 958.53,748.3 958.59,748.3 958.66,743.7 958.73,748.3 958.79,766.7 958.86,752.9 958.93,748.3 958.99,752.9 959.06,748.3 959.13,757.5 959.19,734.5 959.26,743.7 959.33,748.3 959.39,743.7 959.46,743.7 959.53,748.3 959.59,739.1 959.66,743.7 959.73,748.3 959.79,748.3 959.86,762.1 959.93,748.3 959.99,748.3 960.06,757.5 960.13,734.5 960.19,748.3 960.26,762.1 960.33,752.9 960.39,748.3 960.46,748.3 960.53,757.5 960.60,748.3 960.66,766.7 960.73,752.9 960.80,743.7 960.86,757.5 960.93,743.7 961.00,743.7 961.06,757.5 961.13,775.9 961.20,739.1 961.26,734.5 961.33,766.7 961.40,748.3 961.46,748.3 961.53,766.7 961.60,757.5 961.66,739.1 961.73,748.3 961.80,748.3 961.86,739.1 961.93,757.5 962.00,766.7 962.06,734.5 962.13,757.5 962.20,748.3 962.26,739.1 962.33,748.3 962.40,748.3 962.46,757.5 962.53,743.7 962.60,725.3 962.66,757.5 962.73,762.1 962.80,748.3 962.86,757.5 962.93,748.3 963.00,748.3 963.07,743.7 963.13,748.3 963.20,748.3 963.27,734.5 963.33,757.5 963.40,748.3 963.47,748.3 963.53,762.1 963.60,757.5 963.67,752.9 963.73,752.9 963.80,739.1 963.87,748.3 963.93,752.9 964.00,752.9 964.07,752.9 964.13,725.3 964.20,752.9 964.27,725.3 964.33,752.9 964.40,757.5 964.47,734.5 964.53,734.5 964.60,743.7 964.67,757.5 964.73,752.9 964.80,743.7 964.87,748.3 964.93,739.1 965.00,757.5 965.07,739.1 965.13,734.5 965.20,734.5 965.27,743.7 965.33,743.7 965.40,757.5 965.47,762.1 965.53,771.3 965.60,743.7 965.67,729.9 965.74,748.3 965.80,775.9 965.87,748.3 965.94,752.9 966.00,752.9 966.07,729.9 966.14,734.5 966.20,734.5 966.27,757.5 966.34,743.7 966.40,762.1 966.47,739.1 966.54,762.1 966.60,734.5 966.67,748.3 966.74,748.3 966.80,762.1 966.87,743.7 966.94,766.7 967.00,762.1 967.07,757.5 967.14,729.9 967.20,748.3 967.27,757.5 967.34,743.7 967.40,725.3 967.47,752.9 967.54,762.1 967.60,762.1 967.67,748.3 967.74,734.5 967.80,752.9 967.87,752.9 967.94,757.5 968.00,762.1 968.07,739.1 968.14,743.7 968.20,743.7 968.27,762.1 968.34,743.7 968.40,748.3 968.47,734.5 968.54,739.1 968.61,752.9 968.67,748.3 968.74,748.3 968.81,748.3 968.87,757.5 968.94,739.1 969.01,725.3 969.07,748.3 969.14,734.5 969.21,752.9 969.27,752.9 969.34,748.3 969.41,752.9 969.47,739.1 969.54,739.1 969.61,775.9 969.67,739.1 969.74,743.7 969.81,729.9 969.87,757.5 969.94,748.3 970.01,739.1 970.07,739.1 970.14,734.5 970.21,757.5 970.27,757.5 970.34,743.7 970.41,762.1 970.47,743.7 970.54,739.1 970.61,743.7 970.67,762.1 970.74,757.5 970.81,752.9 970.87,743.7 970.94,748.3 971.01,752.9 971.08,766.7 971.14,766.7 971.21,762.1 971.28,762.1 971.34,757.5 971.41,762.1 971.48,780.5 971.54,757.5 971.61,748.3 971.68,748.3 971.74,743.7 971.81,757.5 971.88,757.5 971.94,762.1 972.01,748.3 972.08,743.7 972.14,739.1 972.21,748.3 972.28,752.9 972.34,743.7 972.41,748.3 972.48,762.1 972.54,743.7 972.61,752.9 972.68,766.7 972.74,752.9 972.81,757.5 972.88,748.3 972.94,757.5 973.01,752.9 973.08,757.5 973.14,752.9 973.21,743.7 973.28,748.3 973.34,748.3 973.41,739.1 973.48,762.1 973.54,748.3 973.61,739.1 973.68,743.7 973.75,739.1 973.81,757.5 973.88,739.1 973.95,757.5 974.01,739.1 974.08,748.3 974.15,739.1 974.21,757.5 974.28,752.9 974.35,766.7 974.41,748.3 974.48,743.7 974.55,748.3 974.61,739.1 974.68,743.7 974.75,748.3 974.81,743.7 974.88,752.9 974.95,739.1 975.01,748.3 975.08,748.3 975.15,752.9 975.21,757.5 975.28,757.5 975.35,752.9 975.41,743.7 975.48,766.7 975.55,748.3 975.61,766.7 975.68,748.3 975.75,752.9 975.81,743.7 975.88,748.3 975.95,748.3 976.01,748.3 976.08,757.5 976.15,734.5 976.21,748.3 976.28,739.1 976.35,748.3 976.41,739.1 976.48,748.3 976.55,766.7 976.62,739.1 976.68,734.5 976.75,748.3 976.82,762.1 976.88,752.9 976.95,743.7 977.02,748.3 977.08,752.9 977.15,757.5 977.22,762.1 977.28,752.9 977.35,743.7 977.42,743.7 977.48,743.7 977.55,748.3 977.62,748.3 977.68,748.3 977.75,743.7 977.82,743.7 977.88,743.7 977.95,748.3 978.02,748.3 978.08,734.5 978.15,734.5 978.22,771.3 978.28,743.7 978.35,743.7 978.42,739.1 978.48,771.3 978.55,766.7 978.62,752.9 978.68,748.3 978.75,762.1 978.82,739.1 978.88,739.1 978.95,743.7 979.02,743.7 979.09,762.1 979.15,752.9 979.22,771.3 979.29,739.1 979.35,739.1 979.42,748.3 979.49,762.1 979.55,748.3 979.62,739.1 979.69,762.1 979.75,748.3 979.82,743.7 979.89,757.5 979.95,757.5 980.02,739.1 980.09,743.7 980.15,734.5 980.22,748.3 980.29,757.5 980.35,748.3 980.42,757.5 980.49,752.9 980.55,743.7 980.62,734.5 980.69,748.3 980.75,729.9 980.82,762.1 980.89,752.9 980.95,748.3 981.02,771.3 981.09,766.7 981.15,752.9 981.22,748.3 981.29,743.7 981.35,748.3 981.42,752.9 981.49,762.1 981.55,748.3 981.62,734.5 981.69,743.7 981.75,757.5 981.82,748.3 981.89,743.7 981.96,739.1 982.02,752.9 982.09,743.7 982.16,743.7 982.22,752.9 982.29,748.3 982.36,752.9 982.42,748.3 982.49,748.3 982.56,762.1 982.62,752.9 982.69,734.5 982.76,748.3 982.82,766.7 982.89,734.5 982.96,752.9 983.02,748.3 983.09,743.7 983.16,752.9 983.22,757.5 983.29,757.5 983.36,748.3 983.42,748.3 983.49,752.9 983.56,729.9 983.62,748.3 983.69,739.1 983.76,729.9 983.82,748.3 983.89,752.9 983.96,752.9 984.02,748.3 984.09,729.9 984.16,739.1 984.22,752.9 984.29,752.9 984.36,743.7 984.42,729.9 984.49,752.9 984.56,734.5 984.63,743.7 984.69,748.3 984.76,752.9 984.83,757.5 984.89,752.9 984.96,734.5 985.03,762.1 985.09,752.9 985.16,748.3 985.23,762.1 985.29,752.9 985.36,762.1 985.43,743.7 985.49,743.7 985.56,762.1 985.63,734.5 985.69,757.5 985.76,766.7 985.83,766.7 985.89,743.7 985.96,771.3 986.03,748.3 986.09,748.3 986.16,739.1 986.23,752.9 986.29,739.1 986.36,752.9 986.43,739.1 986.49,757.5 986.56,748.3 986.63,752.9 986.69,748.3 986.76,725.3 986.83,748.3 986.89,748.3 986.96,748.3 987.03,748.3 987.10,771.3 987.16,743.7 987.23,762.1 987.30,771.3 987.36,748.3 987.43,762.1 987.50,748.3 987.56,739.1 987.63,780.5 987.70,762.1 987.76,748.3 987.83,729.9 987.90,748.3 987.96,729.9 988.03,734.5 988.10,762.1 988.16,739.1 988.23,762.1 988.30,743.7 988.36,743.7 988.43,752.9 988.50,766.7 988.56,752.9 988.63,752.9 988.70,743.7 988.76,748.3 988.83,743.7 988.90,752.9 988.96,766.7 989.03,748.3 989.10,734.5 989.16,757.5 989.23,762.1 989.30,771.3 989.36,729.9 989.43,762.1 989.50,739.1 989.56,748.3 989.63,752.9 989.70,748.3 989.76,729.9 989.83,734.5 989.90,743.7 989.97,752.9 990.03,734.5 990.10,743.7 990.17,748.3 990.23,743.7 990.30,757.5 990.37,743.7 990.43,752.9 990.50,752.9 990.57,762.1 990.63,748.3 990.70,743.7 990.77,766.7 990.83,748.3 990.90,743.7 990.97,734.5 991.03,739.1 991.10,757.5 991.17,739.1 991.23,743.7 991.30,752.9 991.37,757.5 991.43,739.1 991.50,739.1 991.57,752.9 991.63,748.3 991.70,752.9 991.77,757.5 991.83,757.5 991.90,743.7 991.97,748.3 992.03,743.7 992.10,748.3 992.17,748.3 992.23,739.1 992.30,766.7 992.37,743.7 992.43,762.1 992.50,752.9 992.57,748.3 992.64,748.3 992.70,743.7 992.77,757.5 992.84,734.5 992.90,739.1 992.97,743.7 993.04,743.7 993.10,752.9 993.17,766.7 993.24,766.7 993.30,743.7 993.37,775.9 993.44,734.5 993.50,743.7 993.57,757.5 993.64,757.5 993.70,766.7 993.77,752.9 993.84,748.3 993.90,739.1 993.97,762.1 994.04,739.1 994.10,748.3 994.17,752.9 994.24,748.3 994.30,748.3 994.37,729.9 994.44,734.5 994.50,743.7 994.57,757.5 994.64,752.9 994.70,739.1 994.77,748.3 994.84,757.5 994.90,729.9 994.97,725.3 995.04,743.7 995.11,752.9 995.17,748.3 995.24,762.1 995.31,762.1 995.37,748.3 995.44,752.9 995.51,739.1 995.57,762.1 995.64,743.7 995.71,748.3 995.77,748.3 995.84,743.7 995.91,734.5 995.97,748.3 996.04,739.1 996.11,757.5 996.17,757.5 996.24,752.9 996.31,739.1 996.37,757.5 996.44,734.5 996.51,757.5 996.57,748.3 996.64,748.3 996.71,734.5 996.77,757.5 996.84,757.5 996.91,711.5 996.97,743.7 997.04,743.7 997.11,762.1 997.17,757.5 997.24,762.1 997.31,729.9 997.37,743.7 997.44,743.7 997.51,771.3 997.57,748.3 997.64,752.9 997.71,739.1 997.77,766.7 997.84,734.5 997.91,743.7 997.98,743.7 998.04,762.1 998.11,729.9 998.18,743.7 998.24,743.7 998.31,748.3 998.38,752.9 998.44,748.3 998.51,748.3 998.58,739.1 998.64,743.7 998.71,757.5 998.78,748.3 998.84,739.1 998.91,752.9 998.98,748.3 999.04,734.5 999.11,743.7 999.18,752.9 999.24,743.7 999.31,739.1 999.38,739.1 999.44,748.3 999.51,729.9 999.58,762.1 999.64,743.7 999.71,743.7 999.78,757.5 999.84,757.5 999.91,757.5 999.98,748.3 1000.04,748.3 1000.11,743.7 1000.18,734.5 1000.24,752.9 1000.31,748.3 1000.38,743.7 1000.45,766.7 1000.51,752.9 1000.58,766.7 1000.65,757.5 1000.71,757.5 1000.78,739.1 1000.85,757.5 1000.91,757.5 1000.98,743.7 1001.05,752.9 1001.11,762.1 1001.18,739.1 1001.25,739.1 1001.31,752.9 1001.38,766.7 1001.45,757.5 1001.51,757.5 1001.58,734.5 1001.65,757.5 1001.71,743.7 1001.78,739.1 1001.85,748.3 1001.91,748.3 1001.98,739.1 1002.05,743.7 1002.11,766.7 1002.18,739.1 1002.25,771.3 1002.31,757.5 1002.38,743.7 1002.45,766.7 1002.51,739.1 1002.58,729.9 1002.65,752.9 1002.71,766.7 1002.78,734.5 1002.85,762.1 1002.91,762.1 1002.98,762.1 1003.05,757.5 1003.12,757.5 1003.18,729.9 1003.25,762.1 1003.32,766.7 1003.38,766.7 1003.45,757.5 1003.52,734.5 1003.58,766.7 1003.65,752.9 1003.72,743.7 1003.78,752.9 1003.85,752.9 1003.92,752.9 1003.98,748.3 1004.05,757.5 1004.12,734.5 1004.18,766.7 1004.25,739.1 1004.32,739.1 1004.38,748.3 1004.45,752.9 1004.52,739.1 1004.58,762.1 1004.65,752.9 1004.72,757.5 1004.78,748.3 1004.85,762.1 1004.92,757.5 1004.98,743.7 1005.05,752.9 1005.12,748.3 1005.18,734.5 1005.25,771.3 1005.32,757.5 1005.38,748.3 1005.45,734.5 1005.52,762.1 1005.58,752.9 1005.65,743.7 1005.72,762.1 1005.78,752.9 1005.85,748.3 1005.92,757.5 1005.99,743.7 1006.05,739.1 1006.12,752.9 1006.19,743.7 1006.25,743.7 1006.32,748.3 1006.39,757.5 1006.45,734.5 1006.52,762.1 1006.59,748.3 1006.65,743.7 1006.72,775.9 1006.79,757.5 1006.85,771.3 1006.92,752.9 1006.99,743.7 1007.05,757.5 1007.12,748.3 1007.19,743.7 1007.25,757.5 1007.32,752.9 1007.39,762.1 1007.45,743.7 1007.52,752.9 1007.59,734.5 1007.65,739.1 1007.72,762.1 1007.79,748.3 1007.85,748.3 1007.92,748.3 1007.99,748.3 1008.05,752.9 1008.12,739.1 1008.19,743.7 1008.25,743.7 1008.32,757.5 1008.39,739.1 1008.46,762.1 1008.52,739.1 1008.59,743.7 1008.66,757.5 1008.72,743.7 1008.79,725.3 1008.86,748.3 1008.92,757.5 1008.99,748.3 1009.06,743.7 1009.12,729.9 1009.19,752.9 1009.26,739.1 1009.32,748.3 1009.39,739.1 1009.46,743.7 1009.52,757.5 1009.59,743.7 1009.66,739.1 1009.72,752.9 1009.79,771.3 1009.86,757.5 1009.92,748.3 1009.99,743.7 1010.06,752.9 1010.12,739.1 1010.19,752.9 1010.26,762.1 1010.32,743.7 1010.39,757.5 1010.46,734.5 1010.52,739.1 1010.59,752.9 1010.66,757.5 1010.72,748.3 1010.79,739.1 1010.86,748.3 1010.92,752.9 1010.99,739.1 1011.06,743.7 1011.12,757.5 1011.19,757.5 1011.26,771.3 1011.33,752.9 1011.39,752.9 1011.46,743.7 1011.53,757.5 1011.59,752.9 1011.66,752.9 1011.73,752.9 1011.79,752.9 1011.86,757.5 1011.93,739.1 1011.99,752.9 1012.06,743.7 1012.13,748.3 1012.19,762.1 1012.26,771.3 1012.33,762.1 1012.39,752.9 1012.46,748.3 1012.53,762.1 1012.59,743.7 1012.66,752.9 1012.73,743.7 1012.79,757.5 1012.86,748.3 1012.93,743.7 1012.99,743.7 1013.06,725.3 1013.13,748.3 1013.19,748.3 1013.26,734.5 1013.33,752.9 1013.39,766.7 1013.46,771.3 1013.53,748.3 1013.59,752.9 1013.66,743.7 1013.73,766.7 1013.79,757.5 1013.86,752.9 1013.93,752.9 1014.00,752.9 1014.06,739.1 1014.13,757.5 1014.20,757.5 1014.26,757.5 1014.33,743.7 1014.40,762.1 1014.46,762.1 1014.53,762.1 1014.60,766.7 1014.66,752.9 1014.73,757.5 1014.80,771.3 1014.86,757.5 1014.93,752.9 1015.00,734.5 1015.06,752.9 1015.13,739.1 1015.20,748.3 1015.26,739.1 1015.33,762.1 1015.40,766.7 1015.46,752.9 1015.53,752.9 1015.60,752.9 1015.66,748.3 1015.73,762.1 1015.80,748.3 1015.86,757.5 1015.93,729.9 1016.00,752.9 1016.06,757.5 1016.13,734.5 1016.20,766.7 1016.26,734.5 1016.33,748.3 1016.40,752.9 1016.47,752.9 1016.53,748.3 1016.60,748.3 1016.67,757.5 1016.73,748.3 1016.80,743.7 1016.87,748.3 1016.93,734.5 1017.00,757.5 1017.07,748.3 1017.13,739.1 1017.20,743.7 1017.27,734.5 1017.33,739.1 1017.40,762.1 1017.47,734.5 1017.53,757.5 1017.60,739.1 1017.67,748.3 1017.73,739.1 1017.80,775.9 1017.87,743.7 1017.93,752.9 1018.00,734.5 1018.07,734.5 1018.13,734.5 1018.20,752.9 1018.27,748.3 1018.33,757.5 1018.40,748.3 1018.47,748.3 1018.53,743.7 1018.60,734.5 1018.67,757.5 1018.73,748.3 1018.80,743.7 1018.87,748.3 1018.93,766.7 1019.00,752.9 1019.07,752.9 1019.13,762.1 1019.20,748.3 1019.27,752.9 1019.34,752.9 1019.40,748.3 1019.47,748.3 1019.54,743.7 1019.60,743.7 1019.67,748.3 1019.74,743.7 1019.80,743.7 1019.87,752.9 1019.94,739.1 1020.00,734.5 1020.07,748.3 1020.14,734.5 1020.20,743.7 1020.27,743.7 1020.34,711.5 1020.40,762.1 1020.47,739.1 1020.54,757.5 1020.60,748.3 1020.67,771.3 1020.74,739.1 1020.80,739.1 1020.87,757.5 1020.94,734.5 1021.00,757.5 1021.07,752.9 1021.14,762.1 1021.20,743.7 1021.27,752.9 1021.34,752.9 1021.40,748.3 1021.47,762.1 1021.54,743.7 1021.60,752.9 1021.67,739.1 1021.74,752.9 1021.81,743.7 1021.87,748.3 1021.94,739.1 1022.01,734.5 1022.07,748.3 1022.14,762.1 1022.21,752.9 1022.27,752.9 1022.34,743.7 1022.41,752.9 1022.47,748.3 1022.54,748.3 1022.61,748.3 1022.67,762.1 1022.74,739.1 1022.81,757.5 1022.87,766.7 1022.94,757.5 1023.01,752.9 1023.07,757.5 1023.14,748.3 1023.21,757.5 1023.27,748.3 1023.34,743.7 1023.41,757.5 1023.47,757.5 1023.54,734.5 1023.61,743.7 1023.67,743.7 1023.74,752.9 1023.81,748.3 1023.87,752.9 1023.94,757.5 1024.01,739.1 1024.07,762.1 1024.14,757.5 1024.21,762.1 1024.27,729.9 1024.34,757.5 1024.41,739.1 1024.47,762.1 1024.54,729.9 1024.61,725.3 1024.68,748.3 1024.74,734.5 1024.81,762.1 1024.88,752.9 1024.94,734.5 1025.01,748.3 1025.08,752.9 1025.14,748.3 1025.21,752.9 1025.28,757.5 1025.34,739.1 1025.41,766.7 1025.48,757.5 1025.54,748.3 1025.61,739.1 1025.68,748.3 1025.74,752.9 1025.81,771.3 1025.88,762.1 1025.94,757.5 1026.01,743.7 1026.08,762.1 1026.14,739.1 1026.21,762.1 1026.28,757.5 1026.34,748.3 1026.41,762.1 1026.48,739.1 1026.54,748.3 1026.61,739.1 1026.68,739.1 1026.74,711.5 1026.81,762.1 1026.88,752.9 1026.94,739.1 1027.01,766.7 1027.08,739.1 1027.14,766.7 1027.21,743.7 1027.28,743.7 1027.35,757.5 1027.41,762.1 1027.48,748.3 1027.55,743.7 1027.61,762.1 1027.68,743.7 1027.75,748.3 1027.81,762.1 1027.88,766.7 1027.95,748.3 1028.01,752.9 1028.08,762.1 1028.15,757.5 1028.21,725.3 1028.28,743.7 1028.35,743.7 1028.41,757.5 1028.48,748.3 1028.55,739.1 1028.61,757.5 1028.68,752.9 1028.75,752.9 1028.81,752.9 1028.88,743.7 1028.95,757.5 1029.01,748.3 1029.08,748.3 1029.15,743.7 1029.21,748.3 1029.28,762.1 1029.35,762.1 1029.41,766.7 1029.48,748.3 1029.55,743.7 1029.61,743.7 1029.68,734.5 1029.75,752.9 1029.82,739.1 1029.88,748.3 1029.95,739.1 1030.02,757.5 1030.08,748.3 1030.15,757.5 1030.22,757.5 1030.28,771.3 1030.35,739.1 1030.42,743.7 1030.48,757.5 1030.55,748.3 1030.62,743.7 1030.68,757.5 1030.75,739.1 1030.82,775.9 1030.88,725.3 1030.95,725.3 1031.02,766.7 1031.08,757.5 1031.15,762.1 1031.22,757.5 1031.28,762.1 1031.35,743.7 1031.42,734.5 1031.48,748.3 1031.55,734.5 1031.62,743.7 1031.68,739.1 1031.75,734.5 1031.82,757.5 1031.88,729.9 1031.95,757.5 1032.02,757.5 1032.08,739.1 1032.15,757.5 1032.22,757.5 1032.28,739.1 1032.35,752.9 1032.42,752.9 1032.49,757.5 1032.55,757.5 1032.62,743.7 1032.69,748.3 1032.75,752.9 1032.82,725.3 1032.89,743.7 1032.95,762.1 1033.02,743.7 1033.09,757.5 1033.15,752.9 1033.22,729.9 1033.29,734.5 1033.35,743.7 1033.42,739.1 1033.49,762.1 1033.55,739.1 1033.62,739.1 1033.69,757.5 1033.75,766.7 1033.82,743.7 1033.89,743.7 1033.95,748.3 1034.02,748.3 1034.09,748.3 1034.15,739.1 1034.22,734.5 1034.29,752.9 1034.35,734.5 1034.42,752.9 1034.49,757.5 1034.55,752.9 1034.62,743.7 1034.69,743.7 1034.75,748.3 1034.82,757.5 1034.89,739.1 1034.95,752.9 1035.02,748.3 1035.09,757.5 1035.15,729.9 1035.22,752.9 1035.29,762.1 1035.36,739.1 1035.42,748.3 1035.49,739.1 1035.56,739.1 1035.62,766.7 1035.69,752.9 1035.76,725.3 1035.82,743.7 1035.89,743.7 1035.96,739.1 1036.02,734.5 1036.09,748.3 1036.16,739.1 1036.22,739.1 1036.29,743.7 1036.36,748.3 1036.42,739.1 1036.49,743.7 1036.56,757.5 1036.62,762.1 1036.69,748.3 1036.76,748.3 1036.82,734.5 1036.89,748.3 1036.96,748.3 1037.02,752.9 1037.09,748.3 1037.16,743.7 1037.22,739.1 1037.29,752.9 1037.36,743.7 1037.42,739.1 1037.49,766.7 1037.56,743.7 1037.62,757.5 1037.69,752.9 1037.76,752.9 1037.83,752.9 1037.89,757.5 1037.96,748.3 1038.03,743.7 1038.09,752.9 1038.16,757.5 1038.23,752.9 1038.29,729.9 1038.36,743.7 1038.43,752.9 1038.49,757.5 1038.56,748.3 1038.63,748.3 1038.69,725.3 1038.76,762.1 1038.83,743.7 1038.89,739.1 1038.96,739.1 1039.03,762.1 1039.09,743.7 1039.16,748.3 1039.23,743.7 1039.29,743.7 1039.36,757.5 1039.43,743.7 1039.49,757.5 1039.56,762.1 1039.63,752.9 1039.69,748.3 1039.76,729.9 1039.83,752.9 1039.89,734.5 1039.96,757.5 1040.03,752.9 1040.09,762.1 1040.16,748.3 1040.23,748.3 1040.29,739.1 1040.36,752.9 1040.43,748.3 1040.49,762.1 1040.56,752.9 1040.63,729.9 1040.70,757.5 1040.76,748.3 1040.83,739.1 1040.90,743.7 1040.96,752.9 1041.03,752.9 1041.10,762.1 1041.16,734.5 1041.23,766.7 1041.30,752.9 1041.36,762.1 1041.43,752.9 1041.50,762.1 1041.56,748.3 1041.63,743.7 1041.70,757.5 1041.76,748.3 1041.83,748.3 1041.90,752.9 1041.96,729.9 1042.03,757.5 1042.10,752.9 1042.16,739.1 1042.23,748.3 1042.30,752.9 1042.36,739.1 1042.43,771.3 1042.50,743.7 1042.56,734.5 1042.63,762.1 1042.70,739.1 1042.76,743.7 1042.83,743.7 1042.90,743.7 1042.96,748.3 1043.03,725.3 1043.10,762.1 1043.16,757.5 1043.23,743.7 1043.30,743.7 1043.37,757.5 1043.43,739.1 1043.50,762.1 1043.57,752.9 1043.63,752.9 1043.70,748.3 1043.77,748.3 1043.83,743.7 1043.90,743.7 1043.97,739.1 1044.03,757.5 1044.10,752.9 1044.17,734.5 1044.23,743.7 1044.30,739.1 1044.37,762.1 1044.43,734.5 1044.50,743.7 1044.57,725.3 1044.63,766.7 1044.70,743.7 1044.77,748.3 1044.83,771.3 1044.90,734.5 1044.97,748.3 1045.03,757.5 1045.10,743.7 1045.17,752.9 1045.23,739.1 1045.30,729.9 1045.37,752.9 1045.43,743.7 1045.50,729.9 1045.57,762.1 1045.63,748.3 1045.70,757.5 1045.77,739.1 1045.84,757.5 1045.90,743.7 1045.97,752.9 1046.04,743.7 1046.10,752.9 1046.17,771.3 1046.24,766.7 1046.30,734.5 1046.37,734.5 1046.44,752.9 1046.50,743.7 1046.57,762.1 1046.64,757.5 1046.70,766.7 1046.77,752.9 1046.84,729.9 1046.90,762.1 1046.97,739.1 1047.04,743.7 1047.10,743.7 1047.17,766.7 1047.24,762.1 1047.30,739.1 1047.37,766.7 1047.44,748.3 1047.50,752.9 1047.57,748.3 1047.64,739.1 1047.70,752.9 1047.77,739.1 1047.84,739.1 1047.90,766.7 1047.97,748.3 1048.04,752.9 1048.10,748.3 1048.17,757.5 1048.24,748.3 1048.30,734.5 1048.37,748.3 1048.44,762.1 1048.51,748.3 1048.57,743.7 1048.64,766.7 1048.71,752.9 1048.77,752.9 1048.84,739.1 1048.91,752.9 1048.97,748.3 1049.04,743.7 1049.11,743.7 1049.17,752.9 1049.24,725.3 1049.31,743.7 1049.37,739.1 1049.44,748.3 1049.51,752.9 1049.57,757.5 1049.64,771.3 1049.71,734.5 1049.77,748.3 1049.84,757.5 1049.91,752.9 1049.97,739.1 1050.04,748.3 1050.11,734.5 1050.17,762.1 1050.24,748.3 1050.31,748.3 1050.37,734.5 1050.44,743.7 1050.51,739.1 1050.57,734.5 1050.64,743.7 1050.71,762.1 1050.77,734.5 1050.84,739.1 1050.91,748.3 1050.97,743.7 1051.04,729.9 1051.11,739.1 1051.17,748.3 1051.24,743.7 1051.31,757.5 1051.38,743.7 1051.44,748.3 1051.51,743.7 1051.58,766.7 1051.64,762.1 1051.71,748.3 1051.78,748.3 1051.84,748.3 1051.91,743.7 1051.98,748.3 1052.04,743.7 1052.11,766.7 1052.18,748.3 1052.24,748.3 1052.31,766.7 1052.38,762.1 1052.44,739.1 1052.51,757.5 1052.58,757.5 1052.64,743.7 1052.71,752.9 1052.78,771.3 1052.84,752.9 1052.91,752.9 1052.98,752.9 1053.04,734.5 1053.11,743.7 1053.18,757.5 1053.24,720.7 1053.31,748.3 1053.38,762.1 1053.44,752.9 1053.51,762.1 1053.58,757.5 1053.64,748.3 1053.71,757.5 1053.78,739.1 1053.85,743.7 1053.91,752.9 1053.98,752.9 1054.05,748.3 1054.11,748.3 1054.18,757.5 1054.25,739.1 1054.31,766.7 1054.38,748.3 1054.45,743.7 1054.51,743.7 1054.58,739.1 1054.65,757.5 1054.71,739.1 1054.78,766.7 1054.85,757.5 1054.91,762.1 1054.98,739.1 1055.05,771.3 1055.11,739.1 1055.18,748.3 1055.25,752.9 1055.31,762.1 1055.38,752.9 1055.45,725.3 1055.51,771.3 1055.58,752.9 1055.65,743.7 1055.71,743.7 1055.78,743.7 1055.85,752.9 1055.91,748.3 1055.98,762.1 1056.05,739.1 1056.11,757.5 1056.18,752.9 1056.25,739.1 1056.31,752.9 1056.38,739.1 1056.45,752.9 1056.52,757.5 1056.58,752.9 1056.65,752.9 1056.72,752.9 1056.78,743.7 1056.85,748.3 1056.92,748.3 1056.98,743.7 1057.05,743.7 1057.12,739.1 1057.18,752.9 1057.25,752.9 1057.32,748.3 1057.38,729.9 1057.45,734.5 1057.52,743.7 1057.58,757.5 1057.65,739.1 1057.72,734.5 1057.78,729.9 1057.85,739.1 1057.92,762.1 1057.98,757.5 1058.05,752.9 1058.12,734.5 1058.18,752.9 1058.25,743.7 1058.32,762.1 1058.38,739.1 1058.45,743.7 1058.52,757.5 1058.58,752.9 1058.65,752.9 1058.72,748.3 1058.78,752.9 1058.85,757.5 1058.92,752.9 1058.98,752.9 1059.05,743.7 1059.12,752.9 1059.18,757.5 1059.25,757.5 1059.32,752.9 1059.39,748.3 1059.45,748.3 1059.52,757.5 1059.59,752.9 1059.65,748.3 1059.72,739.1 1059.79,734.5 1059.85,748.3 1059.92,734.5 1059.99,729.9 1060.05,743.7 1060.12,729.9 1060.19,762.1 1060.25,743.7 1060.32,748.3 1060.39,752.9 1060.45,757.5 1060.52,757.5 1060.59,743.7 1060.65,757.5 1060.72,748.3 1060.79,757.5 1060.85,725.3 1060.92,748.3 1060.99,757.5 1061.05,766.7 1061.12,775.9 1061.19,757.5 1061.25,739.1 1061.32,752.9 1061.39,752.9 1061.45,739.1 1061.52,752.9 1061.59,748.3 1061.65,752.9 1061.72,743.7 1061.79,748.3 1061.86,757.5 1061.92,752.9 1061.99,739.1 1062.06,743.7 1062.12,743.7 1062.19,729.9 1062.26,752.9 1062.32,739.1 1062.39,766.7 1062.46,743.7 1062.52,752.9 1062.59,748.3 1062.66,752.9 1062.72,729.9 1062.79,748.3 1062.86,739.1 1062.92,752.9 1062.99,743.7 1063.06,748.3 1063.12,757.5 1063.19,748.3 1063.26,743.7 1063.32,729.9 1063.39,748.3 1063.46,762.1 1063.52,734.5 1063.59,752.9 1063.66,739.1 1063.72,757.5 1063.79,748.3 1063.86,743.7 1063.92,748.3 1063.99,739.1 1064.06,757.5 1064.12,734.5 1064.19,762.1 1064.26,729.9 1064.32,734.5 1064.39,739.1 1064.46,762.1 1064.53,743.7 1064.59,752.9 1064.66,752.9 1064.73,748.3 1064.79,729.9 1064.86,748.3 1064.93,762.1 1064.99,757.5 1065.06,743.7 1065.13,752.9 1065.19,752.9 1065.26,729.9 1065.33,748.3 1065.39,752.9 1065.46,762.1 1065.53,762.1 1065.59,757.5 1065.66,748.3 1065.73,729.9 1065.79,757.5 1065.86,748.3 1065.93,743.7 1065.99,762.1 1066.06,752.9 1066.13,757.5 1066.19,748.3 1066.26,757.5 1066.33,757.5 1066.39,771.3 1066.46,748.3 1066.53,748.3 1066.59,743.7 1066.66,748.3 1066.73,734.5 1066.79,762.1 1066.86,752.9 1066.93,762.1 1066.99,743.7 1067.06,734.5 1067.13,743.7 1067.19,734.5 1067.26,739.1 1067.33,762.1 1067.40,752.9 1067.46,752.9 1067.53,752.9 1067.60,762.1 1067.66,762.1 1067.73,725.3 1067.80,729.9 1067.86,748.3 1067.93,748.3 1068.00,734.5 1068.06,762.1 1068.13,762.1 1068.20,752.9 1068.26,748.3 1068.33,734.5 1068.40,757.5 1068.46,752.9 1068.53,762.1 1068.60,752.9 1068.66,766.7 1068.73,739.1 1068.80,743.7 1068.86,752.9 1068.93,752.9 1069.00,748.3 1069.06,748.3 1069.13,757.5 1069.20,757.5 1069.26,743.7 1069.33,752.9 1069.40,766.7 1069.46,743.7 1069.53,729.9 1069.60,743.7 1069.66,757.5 1069.73,752.9 1069.80,743.7 1069.87,743.7 1069.93,743.7 1070.00,748.3 1070.07,743.7 1070.13,743.7 1070.20,757.5 1070.27,771.3 1070.33,748.3 1070.40,743.7 1070.47,734.5 1070.53,757.5 1070.60,752.9 1070.67,762.1 1070.73,757.5 1070.80,739.1 1070.87,720.7 1070.93,748.3 1071.00,743.7 1071.07,739.1 1071.13,757.5 1071.20,743.7 1071.27,734.5 1071.33,762.1 1071.40,734.5 1071.47,729.9 1071.53,734.5 1071.60,734.5 1071.67,752.9 1071.73,739.1 1071.80,771.3 1071.87,762.1 1071.93,743.7 1072.00,748.3 1072.07,716.1 1072.13,748.3 1072.20,743.7 1072.27,757.5 1072.33,734.5 1072.40,748.3 1072.47,752.9 1072.54,748.3 1072.60,752.9 1072.67,743.7 1072.74,757.5 1072.80,757.5 1072.87,766.7 1072.94,762.1 1073.00,752.9 1073.07,757.5 1073.14,729.9 1073.20,743.7 1073.27,752.9 1073.34,739.1 1073.40,734.5 1073.47,743.7 1073.54,757.5 1073.60,752.9 1073.67,739.1 1073.74,766.7 1073.80,757.5 1073.87,762.1 1073.94,752.9 1074.00,762.1 1074.07,752.9 1074.14,743.7 1074.20,766.7 1074.27,720.7 1074.34,743.7 1074.40,752.9 1074.47,734.5 1074.54,743.7 1074.60,743.7 1074.67,748.3 1074.74,748.3 1074.80,752.9 1074.87,748.3 1074.94,743.7 1075.00,743.7 1075.07,739.1 1075.14,748.3 1075.20,739.1 1075.27,739.1 1075.34,752.9 1075.41,757.5 1075.47,734.5 1075.54,748.3 1075.61,743.7 1075.67,748.3 1075.74,757.5 1075.81,757.5 1075.87,748.3 1075.94,752.9 1076.01,752.9 1076.07,752.9 1076.14,729.9 1076.21,739.1 1076.27,739.1 1076.34,743.7 1076.41,766.7 1076.47,739.1 1076.54,725.3 1076.61,743.7 1076.67,734.5 1076.74,762.1 1076.81,743.7 1076.87,743.7 1076.94,739.1 1077.01,748.3 1077.07,743.7 1077.14,762.1 1077.21,757.5 1077.27,752.9 1077.34,743.7 1077.41,743.7 1077.47,762.1 1077.54,743.7 1077.61,729.9 1077.67,743.7 1077.74,734.5 1077.81,734.5 1077.88,734.5 1077.94,743.7 1078.01,757.5 1078.08,752.9 1078.14,739.1 1078.21,734.5 1078.28,748.3 1078.34,734.5 1078.41,766.7 1078.48,752.9 1078.54,743.7 1078.61,743.7 1078.68,752.9 1078.74,757.5 1078.81,752.9 1078.88,748.3 1078.94,739.1 1079.01,789.7 1079.08,757.5 1079.14,743.7 1079.21,725.3 1079.28,752.9 1079.34,762.1 1079.41,748.3 1079.48,743.7 1079.54,748.3 1079.61,739.1 1079.68,743.7 1079.74,743.7 1079.81,729.9 1079.88,729.9 1079.94,734.5 1080.01,739.1 1080.08,748.3 1080.14,743.7 1080.21,743.7 1080.28,752.9 1080.34,743.7 1080.41,752.9 1080.48,739.1 1080.55,743.7 1080.61,743.7 1080.68,748.3 1080.75,757.5 1080.81,748.3 1080.88,762.1 1080.95,739.1 1081.01,748.3 1081.08,743.7 1081.15,739.1 1081.21,729.9 1081.28,757.5 1081.35,743.7 1081.41,748.3 1081.48,743.7 1081.55,734.5 1081.61,748.3 1081.68,729.9 1081.75,739.1 1081.81,766.7 1081.88,762.1 1081.95,752.9 1082.01,743.7 1082.08,739.1 1082.15,734.5 1082.21,734.5 1082.28,734.5 1082.35,762.1 1082.41,739.1 1082.48,748.3 1082.55,748.3 1082.61,743.7 1082.68,752.9 1082.75,739.1 1082.81,748.3 1082.88,757.5 1082.95,748.3 1083.01,752.9 1083.08,748.3 1083.15,729.9 1083.21,743.7 1083.28,734.5 1083.35,739.1 1083.42,766.7 1083.48,729.9 1083.55,748.3 1083.62,748.3 1083.68,757.5 1083.75,743.7 1083.82,766.7 1083.88,734.5 1083.95,752.9 1084.02,743.7 1084.08,748.3 1084.15,752.9 1084.22,748.3 1084.28,729.9 1084.35,757.5 1084.42,752.9 1084.48,734.5 1084.55,757.5 1084.62,752.9 1084.68,757.5 1084.75,757.5 1084.82,739.1 1084.88,739.1 1084.95,748.3 1085.02,748.3 1085.08,762.1 1085.15,762.1 1085.22,757.5 1085.28,748.3 1085.35,734.5 1085.42,739.1 1085.48,766.7 1085.55,748.3 1085.62,743.7 1085.68,757.5 1085.75,739.1 1085.82,766.7 1085.88,757.5 1085.95,757.5 1086.02,743.7 1086.09,739.1 1086.15,762.1 1086.22,743.7 1086.29,739.1 1086.35,748.3 1086.42,752.9 1086.49,762.1 1086.55,748.3 1086.62,752.9 1086.69,729.9 1086.75,752.9 1086.82,748.3 1086.89,771.3 1086.95,739.1 1087.02,757.5 1087.09,729.9 1087.15,752.9 1087.22,739.1 1087.29,734.5 1087.35,734.5 1087.42,748.3 1087.49,743.7 1087.55,743.7 1087.62,752.9 1087.69,762.1 1087.75,762.1 1087.82,757.5 1087.89,743.7 1087.95,757.5 1088.02,743.7 1088.09,743.7 1088.15,752.9 1088.22,743.7 1088.29,748.3 1088.35,752.9 1088.42,748.3 1088.49,748.3 1088.56,762.1 1088.62,734.5 1088.69,766.7 1088.76,743.7 1088.82,739.1 1088.89,734.5 1088.96,739.1 1089.02,734.5 1089.09,739.1 1089.16,757.5 1089.22,720.7 1089.29,739.1 1089.36,766.7 1089.42,752.9 1089.49,734.5 1089.56,752.9 1089.62,748.3 1089.69,762.1 1089.76,743.7 1089.82,729.9 1089.89,725.3 1089.96,762.1 1090.02,748.3 1090.09,739.1 1090.16,757.5 1090.22,743.7 1090.29,739.1 1090.36,748.3 1090.42,748.3 1090.49,762.1 1090.56,743.7 1090.62,739.1 1090.69,762.1 1090.76,734.5 1090.82,748.3 1090.89,752.9 1090.96,734.5 1091.02,743.7 1091.09,725.3 1091.16,752.9 1091.22,748.3 1091.29,748.3 1091.36,771.3 1091.43,734.5 1091.49,748.3 1091.56,752.9 1091.63,743.7 1091.69,743.7 1091.76,748.3 1091.83,757.5 1091.89,743.7 1091.96,748.3 1092.03,743.7 1092.09,748.3 1092.16,771.3 1092.23,748.3 1092.29,757.5 1092.36,771.3 1092.43,757.5 1092.49,739.1 1092.56,762.1 1092.63,762.1 1092.69,743.7 1092.76,771.3 1092.83,743.7 1092.89,743.7 1092.96,766.7 1093.03,706.9 1093.09,752.9 1093.16,762.1 1093.23,720.7 1093.29,757.5 1093.36,762.1 1093.43,743.7 1093.49,734.5 1093.56,752.9 1093.63,743.7 1093.69,734.5 1093.76,743.7 1093.83,739.1 1093.89,762.1 1093.96,752.9 1094.03,739.1 1094.10,757.5 1094.16,752.9 1094.23,752.9 1094.30,725.3 1094.36,748.3 1094.43,748.3 1094.50,739.1 1094.56,757.5 1094.63,762.1 1094.70,752.9 1094.76,729.9 1094.83,743.7 1094.90,743.7 1094.96,743.7 1095.03,748.3 1095.10,752.9 1095.16,739.1 1095.23,743.7 1095.30,748.3 1095.36,752.9 1095.43,748.3 1095.50,734.5 1095.56,743.7 1095.63,752.9 1095.70,729.9 1095.76,766.7 1095.83,734.5 1095.90,762.1 1095.96,734.5 1096.03,734.5 1096.10,752.9 1096.16,743.7 1096.23,734.5 1096.30,762.1 1096.36,766.7 1096.43,734.5 1096.50,757.5 1096.57,752.9 1096.63,734.5 1096.70,762.1 1096.77,748.3 1096.83,739.1 1096.90,757.5 1096.97,743.7 1097.03,743.7 1097.10,748.3 1097.17,752.9 1097.23,748.3 1097.30,748.3 1097.37,739.1 1097.43,757.5 1097.50,734.5 1097.57,748.3 1097.63,729.9 1097.70,729.9 1097.77,752.9 1097.83,739.1 1097.90,743.7 1097.97,743.7 1098.03,739.1 1098.10,743.7 1098.17,757.5 1098.23,752.9 1098.30,748.3 1098.37,734.5 1098.43,757.5 1098.50,739.1 1098.57,734.5 1098.63,762.1 1098.70,757.5 1098.77,739.1 1098.83,743.7 1098.90,766.7 1098.97,729.9 1099.03,743.7 1099.10,766.7 1099.17,757.5 1099.24,748.3 1099.30,748.3 1099.37,743.7 1099.44,748.3 1099.50,748.3 1099.57,752.9 1099.64,752.9 1099.70,743.7 1099.77,752.9 1099.84,739.1 1099.90,748.3 1099.97,766.7 1100.04,743.7 1100.10,739.1 1100.17,720.7 1100.24,743.7 1100.30,752.9 1100.37,762.1 1100.44,752.9 1100.50,743.7 1100.57,739.1 1100.64,757.5 1100.70,762.1 1100.77,743.7 1100.84,762.1 1100.90,762.1 1100.97,743.7 1101.04,743.7 1101.10,748.3 1101.17,743.7 1101.24,771.3 1101.30,748.3 1101.37,752.9 1101.44,743.7 1101.50,757.5 1101.57,748.3 1101.64,748.3 1101.70,771.3 1101.77,771.3 1101.84,739.1 1101.90,743.7 1101.97,739.1 1102.04,743.7 1102.11,748.3 1102.17,739.1 1102.24,752.9 1102.31,748.3 1102.37,752.9 1102.44,766.7 1102.51,762.1 1102.57,748.3 1102.64,734.5 1102.71,752.9 1102.77,743.7 1102.84,752.9 1102.91,766.7 1102.97,748.3 1103.04,748.3 1103.11,748.3 1103.17,752.9 1103.24,743.7 1103.31,748.3 1103.37,743.7 1103.44,743.7 1103.51,748.3 1103.57,748.3 1103.64,752.9 1103.71,757.5 1103.77,739.1 1103.84,752.9 1103.91,739.1 1103.97,743.7 1104.04,748.3 1104.11,757.5 1104.17,766.7 1104.24,729.9 1104.31,762.1 1104.37,752.9 1104.44,748.3 1104.51,752.9 1104.58,752.9 1104.64,757.5 1104.71,743.7 1104.78,743.7 1104.84,748.3 1104.91,748.3 1104.98,752.9 1105.04,743.7 1105.11,752.9 1105.18,734.5 1105.24,734.5 1105.31,743.7 1105.38,757.5 1105.44,757.5 1105.51,743.7 1105.58,734.5 1105.64,752.9 1105.71,743.7 1105.78,734.5 1105.84,757.5 1105.91,739.1 1105.98,729.9 1106.04,748.3 1106.11,757.5 1106.18,757.5 1106.24,739.1 1106.31,748.3 1106.38,734.5 1106.44,734.5 1106.51,739.1 1106.58,743.7 1106.64,743.7 1106.71,743.7 1106.78,725.3 1106.84,757.5 1106.91,734.5 1106.98,748.3 1107.04,739.1 1107.11,762.1 1107.18,734.5 1107.24,757.5 1107.31,748.3 1107.38,762.1 1107.45,748.3 1107.51,752.9 1107.58,748.3 1107.65,729.9 1107.71,743.7 1107.78,766.7 1107.85,762.1 1107.91,748.3 1107.98,762.1 1108.05,739.1 1108.11,748.3 1108.18,743.7 1108.25,729.9 1108.31,739.1 1108.38,748.3 1108.45,752.9 1108.51,729.9 1108.58,743.7 1108.65,739.1 1108.71,743.7 1108.78,734.5 1108.85,743.7 1108.91,748.3 1108.98,734.5 1109.05,743.7 1109.11,734.5 1109.18,734.5 1109.25,752.9 1109.31,734.5 1109.38,739.1 1109.45,729.9 1109.51,748.3 1109.58,743.7 1109.65,743.7 1109.71,734.5 1109.78,762.1 1109.85,752.9 1109.91,743.7 1109.98,743.7 1110.05,734.5 1110.12,739.1 1110.18,762.1 1110.25,748.3 1110.32,729.9 1110.38,766.7 1110.45,739.1 1110.52,752.9 1110.58,748.3 1110.65,739.1 1110.72,729.9 1110.78,743.7 1110.85,729.9 1110.92,739.1 1110.98,743.7 1111.05,729.9 1111.12,729.9 1111.18,743.7 1111.25,766.7 1111.32,734.5 1111.38,771.3 1111.45,762.1 1111.52,752.9 1111.58,752.9 1111.65,729.9 1111.72,729.9 1111.78,734.5 1111.85,739.1 1111.92,762.1 1111.98,762.1 1112.05,743.7 1112.12,739.1 1112.18,748.3 1112.25,752.9 1112.32,743.7 1112.38,743.7 1112.45,743.7 1112.52,752.9 1112.59,748.3 1112.65,739.1 1112.72,734.5 1112.79,771.3 1112.85,748.3 1112.92,739.1 1112.99,734.5 1113.05,757.5 1113.12,762.1 1113.19,762.1 1113.25,752.9 1113.32,757.5 1113.39,762.1 1113.45,748.3 1113.52,739.1 1113.59,752.9 1113.65,757.5 1113.72,729.9 1113.79,757.5 1113.85,752.9 1113.92,748.3 1113.99,743.7 1114.05,739.1 1114.12,762.1 1114.19,748.3 1114.25,752.9 1114.32,762.1 1114.39,725.3 1114.45,748.3 1114.52,739.1 1114.59,743.7 1114.65,752.9 1114.72,748.3 1114.79,725.3 1114.85,743.7 1114.92,743.7 1114.99,739.1 1115.05,748.3 1115.12,748.3 1115.19,757.5 1115.26,729.9 1115.32,748.3 1115.39,743.7 1115.46,739.1 1115.52,752.9 1115.59,757.5 1115.66,743.7 1115.72,748.3 1115.79,739.1 1115.86,762.1 1115.92,766.7 1115.99,748.3 1116.06,748.3 1116.12,748.3 1116.19,757.5 1116.26,752.9 1116.32,725.3 1116.39,748.3 1116.46,752.9 1116.52,743.7 1116.59,743.7 1116.66,762.1 1116.72,748.3 1116.79,739.1 1116.86,762.1 1116.92,766.7 1116.99,743.7 1117.06,739.1 1117.12,725.3 1117.19,734.5 1117.26,720.7 1117.32,752.9 1117.39,739.1 1117.46,757.5 1117.52,743.7 1117.59,729.9 1117.66,743.7 1117.72,748.3 1117.79,734.5 1117.86,752.9 1117.92,743.7 1117.99,739.1 1118.06,757.5 1118.13,729.9 1118.19,734.5 1118.26,739.1 1118.33,743.7 1118.39,743.7 1118.46,748.3 1118.53,743.7 1118.59,725.3 1118.66,734.5 1118.73,739.1 1118.79,757.5 1118.86,734.5 1118.93,739.1 1118.99,766.7 1119.06,766.7 1119.13,748.3 1119.19,748.3 1119.26,752.9 1119.33,729.9 1119.39,748.3 1119.46,739.1 1119.53,757.5 1119.59,739.1 1119.66,734.5 1119.73,752.9 1119.79,729.9 1119.86,748.3 1119.93,739.1 1119.99,739.1 1120.06,757.5 1120.13,729.9 1120.19,766.7 1120.26,739.1 1120.33,748.3 1120.39,748.3 1120.46,757.5 1120.53,748.3 1120.60,720.7 1120.66,725.3 1120.73,743.7 1120.80,766.7 1120.86,752.9 1120.93,757.5 1121.00,762.1 1121.06,743.7 1121.13,752.9 1121.20,748.3 1121.26,734.5 1121.33,734.5 1121.40,762.1 1121.46,752.9 1121.53,739.1 1121.60,725.3 1121.66,734.5 1121.73,734.5 1121.80,734.5 1121.86,725.3 1121.93,743.7 1122.00,739.1 1122.06,748.3 1122.13,757.5 1122.20,752.9 1122.26,739.1 1122.33,757.5 1122.40,743.7 1122.46,757.5 1122.53,748.3 1122.60,729.9 1122.66,748.3 1122.73,762.1 1122.80,729.9 1122.86,716.1 1122.93,743.7 1123.00,757.5 1123.06,729.9 1123.13,757.5 1123.20,757.5 1123.27,734.5 1123.33,757.5 1123.40,757.5 1123.47,739.1 1123.53,757.5 1123.60,739.1 1123.67,729.9 1123.73,739.1 1123.80,734.5 1123.87,748.3 1123.93,729.9 1124.00,743.7 1124.07,757.5 1124.13,729.9 1124.20,739.1 1124.27,729.9 1124.33,766.7 1124.40,752.9 1124.47,734.5 1124.53,757.5 1124.60,757.5 1124.67,752.9 1124.73,739.1 1124.80,743.7 1124.87,743.7 1124.93,739.1 1125.00,748.3 1125.07,739.1 1125.13,748.3 1125.20,743.7 1125.27,743.7 1125.33,748.3 1125.40,752.9 1125.47,748.3 1125.53,729.9 1125.60,739.1 1125.67,739.1 1125.73,757.5 1125.80,752.9 1125.87,743.7 1125.93,752.9 1126.00,762.1 1126.07,757.5 1126.14,752.9 1126.20,743.7 1126.27,743.7 1126.34,757.5 1126.40,739.1 1126.47,766.7 1126.54,743.7 1126.60,743.7 1126.67,748.3 1126.74,752.9 1126.80,748.3 1126.87,743.7 1126.94,743.7 1127.00,748.3 1127.07,752.9 1127.14,762.1 1127.20,743.7 1127.27,734.5 1127.34,734.5 1127.40,739.1 1127.47,739.1 1127.54,739.1 1127.60,734.5 1127.67,739.1 1127.74,752.9 1127.80,739.1 1127.87,734.5 1127.94,762.1 1128.00,748.3 1128.07,739.1 1128.14,739.1 1128.20,739.1 1128.27,748.3 1128.34,748.3 1128.40,734.5 1128.47,739.1 1128.54,739.1 1128.61,752.9 1128.67,734.5 1128.74,739.1 1128.81,757.5 1128.87,752.9 1128.94,748.3 1129.01,748.3 1129.07,739.1 1129.14,725.3 1129.21,734.5 1129.27,757.5 1129.34,748.3 1129.41,752.9 1129.47,752.9 1129.54,752.9 1129.61,748.3 1129.67,752.9 1129.74,743.7 1129.81,748.3 1129.87,725.3 1129.94,743.7 1130.01,729.9 1130.07,720.7 1130.14,757.5 1130.21,739.1 1130.27,743.7 1130.34,734.5 1130.41,762.1 1130.47,752.9 1130.54,743.7 1130.61,762.1 1130.67,739.1 1130.74,720.7 1130.81,716.1 1130.87,734.5 1130.94,752.9 1131.01,739.1 1131.07,734.5 1131.14,739.1 1131.21,739.1 1131.28,748.3 1131.34,739.1 1131.41,771.3 1131.48,752.9 1131.54,739.1 1131.61,743.7 1131.68,729.9 1131.74,748.3 1131.81,725.3 1131.88,734.5 1131.94,739.1 1132.01,752.9 1132.08,752.9 1132.14,739.1 1132.21,757.5 1132.28,748.3 1132.34,743.7 1132.41,743.7 1132.48,748.3 1132.54,734.5 1132.61,757.5 1132.68,725.3 1132.74,729.9 1132.81,729.9 1132.88,752.9 1132.94,743.7 1133.01,734.5 1133.08,739.1 1133.14,743.7 1133.21,748.3 1133.28,757.5 1133.34,748.3 1133.41,734.5 1133.48,739.1 1133.54,748.3 1133.61,762.1 1133.68,752.9 1133.74,752.9 1133.81,752.9 1133.88,766.7 1133.94,734.5 1134.01,739.1 1134.08,748.3 1134.15,743.7 1134.21,743.7 1134.28,739.1 1134.35,757.5 1134.41,725.3 1134.48,762.1 1134.55,748.3 1134.61,739.1 1134.68,757.5 1134.75,766.7 1134.81,757.5 1134.88,748.3 1134.95,743.7 1135.01,720.7 1135.08,734.5 1135.15,734.5 1135.21,739.1 1135.28,752.9 1135.35,739.1 1135.41,734.5 1135.48,748.3 1135.55,739.1 1135.61,734.5 1135.68,771.3 1135.75,752.9 1135.81,748.3 1135.88,771.3 1135.95,743.7 1136.01,729.9 1136.08,748.3 1136.15,762.1 1136.21,748.3 1136.28,729.9 1136.35,748.3 1136.41,748.3 1136.48,743.7 1136.55,739.1 1136.62,752.9 1136.68,748.3 1136.75,739.1 1136.82,739.1 1136.88,729.9 1136.95,752.9 1137.02,729.9 1137.08,720.7 1137.15,725.3 1137.22,743.7 1137.28,734.5 1137.35,720.7 1137.42,757.5 1137.48,748.3 1137.55,752.9 1137.62,739.1 1137.68,743.7 1137.75,743.7 1137.82,739.1 1137.88,739.1 1137.95,739.1 1138.02,752.9 1138.08,734.5 1138.15,725.3 1138.22,743.7 1138.28,748.3 1138.35,729.9 1138.42,748.3 1138.48,734.5 1138.55,748.3 1138.62,748.3 1138.68,743.7 1138.75,748.3 1138.82,752.9 1138.88,766.7 1138.95,729.9 1139.02,725.3 1139.08,739.1 1139.15,757.5 1139.22,729.9 1139.29,739.1 1139.35,725.3 1139.42,743.7 1139.49,743.7 1139.55,743.7 1139.62,757.5 1139.69,748.3 1139.75,752.9 1139.82,748.3 1139.89,752.9 1139.95,748.3 1140.02,734.5 1140.09,743.7 1140.15,752.9 1140.22,739.1 1140.29,734.5 1140.35,752.9 1140.42,757.5 1140.49,762.1 1140.55,739.1 1140.62,743.7 1140.69,766.7 1140.75,734.5 1140.82,725.3 1140.89,734.5 1140.95,725.3 1141.02,748.3 1141.09,762.1 1141.15,739.1 1141.22,748.3 1141.29,743.7 1141.35,748.3 1141.42,771.3 1141.49,757.5 1141.55,752.9 1141.62,743.7 1141.69,739.1 1141.75,729.9 1141.82,739.1 1141.89,743.7 1141.95,748.3 1142.02,752.9 1142.09,748.3 1142.16,743.7 1142.22,752.9 1142.29,752.9 1142.36,739.1 1142.42,743.7 1142.49,729.9 1142.56,748.3 1142.62,752.9 1142.69,752.9 1142.76,725.3 1142.82,743.7 1142.89,757.5 1142.96,739.1 1143.02,757.5 1143.09,752.9 1143.16,748.3 1143.22,739.1 1143.29,757.5 1143.36,734.5 1143.42,748.3 1143.49,752.9 1143.56,743.7 1143.62,734.5 1143.69,725.3 1143.76,757.5 1143.82,743.7 1143.89,748.3 1143.96,734.5 1144.02,734.5 1144.09,743.7 1144.16,729.9 1144.22,743.7 1144.29,729.9 1144.36,752.9 1144.42,725.3 1144.49,748.3 1144.56,762.1 1144.62,739.1 1144.69,734.5 1144.76,757.5 1144.83,752.9 1144.89,743.7 1144.96,752.9 1145.03,734.5 1145.09,757.5 1145.16,729.9 1145.23,729.9 1145.29,743.7 1145.36,752.9 1145.43,748.3 1145.49,752.9 1145.56,757.5 1145.63,766.7 1145.69,725.3 1145.76,752.9 1145.83,752.9 1145.89,757.5 1145.96,748.3 1146.03,748.3 1146.09,734.5 1146.16,734.5 1146.23,743.7 1146.29,743.7 1146.36,762.1 1146.43,748.3 1146.49,748.3 1146.56,729.9 1146.63,775.9 1146.69,743.7 1146.76,748.3 1146.83,752.9 1146.89,748.3 1146.96,762.1 1147.03,743.7 1147.09,739.1 1147.16,739.1 1147.23,739.1 1147.30,748.3 1147.36,739.1 1147.43,748.3 1147.50,743.7 1147.56,734.5 1147.63,739.1 1147.70,743.7 1147.76,757.5 1147.83,771.3 1147.90,748.3 1147.96,743.7 1148.03,743.7 1148.10,743.7 1148.16,752.9 1148.23,739.1 1148.30,739.1 1148.36,739.1 1148.43,739.1 1148.50,729.9 1148.56,725.3 1148.63,739.1 1148.70,729.9 1148.76,739.1 1148.83,752.9 1148.90,748.3 1148.96,757.5 1149.03,752.9 1149.10,743.7 1149.16,748.3 1149.23,743.7 1149.30,762.1 1149.36,757.5 1149.43,743.7 1149.50,734.5 1149.56,720.7 1149.63,762.1 1149.70,757.5 1149.76,739.1 1149.83,748.3 1149.90,739.1 1149.96,734.5 1150.03,757.5 1150.10,752.9 1150.17,748.3 1150.23,743.7 1150.30,739.1 1150.37,734.5 1150.43,748.3 1150.50,739.1 1150.57,743.7 1150.63,729.9 1150.70,729.9 1150.77,739.1 1150.83,748.3 1150.90,766.7 1150.97,729.9 1151.03,757.5 1151.10,757.5 1151.17,739.1 1151.23,729.9 1151.30,748.3 1151.37,748.3 1151.43,752.9 1151.50,743.7 1151.57,743.7 1151.63,739.1 1151.70,762.1 1151.77,734.5 1151.83,757.5 1151.90,748.3 1151.97,743.7 1152.03,739.1 1152.10,748.3 1152.17,762.1 1152.23,739.1 1152.30,743.7 1152.37,743.7 1152.43,748.3 1152.50,739.1 1152.57,734.5 1152.63,743.7 1152.70,739.1 1152.77,752.9 1152.84,743.7 1152.90,752.9 1152.97,766.7 1153.04,748.3 1153.10,752.9 1153.17,752.9 1153.24,757.5 1153.30,743.7 1153.37,752.9 1153.44,734.5 1153.50,762.1 1153.57,734.5 1153.64,748.3 1153.70,743.7 1153.77,748.3 1153.84,743.7 1153.90,734.5 1153.97,739.1 1154.04,752.9 1154.10,743.7 1154.17,748.3 1154.24,762.1 1154.30,748.3 1154.37,739.1 1154.44,725.3 1154.50,725.3 1154.57,752.9 1154.64,757.5 1154.70,762.1 1154.77,748.3 1154.84,762.1 1154.90,725.3 1154.97,743.7 1155.04,734.5 1155.10,734.5 1155.17,739.1 1155.24,734.5 1155.31,725.3 1155.37,729.9 1155.44,725.3 1155.51,748.3 1155.57,743.7 1155.64,743.7 1155.71,734.5 1155.77,752.9 1155.84,739.1 1155.91,743.7 1155.97,748.3 1156.04,743.7 1156.11,748.3 1156.17,743.7 1156.24,748.3 1156.31,752.9 1156.37,729.9 1156.44,757.5 1156.51,739.1 1156.57,743.7 1156.64,734.5 1156.71,739.1 1156.77,743.7 1156.84,729.9 1156.91,743.7 1156.97,748.3 1157.04,739.1 1157.11,743.7 1157.17,748.3 1157.24,729.9 1157.31,748.3 1157.37,739.1 1157.44,757.5 1157.51,757.5 1157.57,748.3 1157.64,743.7 1157.71,752.9 1157.77,739.1 1157.84,752.9 1157.91,739.1 1157.97,743.7 1158.04,734.5 1158.11,752.9 1158.18,725.3 1158.24,748.3 1158.31,743.7 1158.38,748.3 1158.44,748.3 1158.51,752.9 1158.58,748.3 1158.64,739.1 1158.71,752.9 1158.78,743.7 1158.84,739.1 1158.91,743.7 1158.98,766.7 1159.04,757.5 1159.11,734.5 1159.18,739.1 1159.24,743.7 1159.31,739.1 1159.38,748.3 1159.44,729.9 1159.51,734.5 1159.58,748.3 1159.64,743.7 1159.71,748.3 1159.78,743.7 1159.84,734.5 1159.91,748.3 1159.98,757.5 1160.04,729.9 1160.11,739.1 1160.18,720.7 1160.24,743.7 1160.31,752.9 1160.38,748.3 1160.44,729.9 1160.51,725.3 1160.58,729.9 1160.64,734.5 1160.71,734.5 1160.78,729.9 1160.85,748.3 1160.91,775.9 1160.98,743.7 1161.05,734.5 1161.11,725.3 1161.18,748.3 1161.25,734.5 1161.31,748.3 1161.38,757.5 1161.45,748.3 1161.51,734.5 1161.58,752.9 1161.65,762.1 1161.71,734.5 1161.78,739.1 1161.85,725.3 1161.91,743.7 1161.98,748.3 1162.05,729.9 1162.11,752.9 1162.18,748.3 1162.25,743.7 1162.31,757.5 1162.38,752.9 1162.45,762.1 1162.51,762.1 1162.58,734.5 1162.65,734.5 1162.71,739.1 1162.78,743.7 1162.85,725.3 1162.91,752.9 1162.98,729.9 1163.05,729.9 1163.11,739.1 1163.18,748.3 1163.25,739.1 1163.32,752.9 1163.38,739.1 1163.45,743.7 1163.52,748.3 1163.58,743.7 1163.65,748.3 1163.72,725.3 1163.78,734.5 1163.85,762.1 1163.92,748.3 1163.98,734.5 1164.05,743.7 1164.12,739.1 1164.18,748.3 1164.25,748.3 1164.32,734.5 1164.38,757.5 1164.45,757.5 1164.52,729.9 1164.58,748.3 1164.65,729.9 1164.72,743.7 1164.78,734.5 1164.85,743.7 1164.92,748.3 1164.98,739.1 1165.05,748.3 1165.12,743.7 1165.18,752.9 1165.25,734.5 1165.32,762.1 1165.38,752.9 1165.45,757.5 1165.52,748.3 1165.58,734.5 1165.65,739.1 1165.72,748.3 1165.78,739.1 1165.85,748.3 1165.92,752.9 1165.99,752.9 1166.05,757.5 1166.12,752.9 1166.19,734.5 1166.25,762.1 1166.32,739.1 1166.39,739.1 1166.45,734.5 1166.52,748.3 1166.59,757.5 1166.65,743.7 1166.72,752.9 1166.79,734.5 1166.85,743.7 1166.92,743.7 1166.99,743.7 1167.05,752.9 1167.12,725.3 1167.19,757.5 1167.25,752.9 1167.32,752.9 1167.39,752.9 1167.45,739.1 1167.52,734.5 1167.59,739.1 1167.65,752.9 1167.72,748.3 1167.79,739.1 1167.85,743.7 1167.92,739.1 1167.99,739.1 1168.05,734.5 1168.12,743.7 1168.19,734.5 1168.25,757.5 1168.32,734.5 1168.39,752.9 1168.45,743.7 1168.52,743.7 1168.59,743.7 1168.65,729.9 1168.72,739.1 1168.79,748.3 1168.86,748.3 1168.92,757.5 1168.99,739.1 1169.06,752.9 1169.12,734.5 1169.19,743.7 1169.26,748.3 1169.32,739.1 1169.39,752.9 1169.46,748.3 1169.52,743.7 1169.59,748.3 1169.66,729.9 1169.72,739.1 1169.79,752.9 1169.86,729.9 1169.92,739.1 1169.99,734.5 1170.06,743.7 1170.12,729.9 1170.19,739.1 1170.26,729.9 1170.32,743.7 1170.39,748.3 1170.46,739.1 1170.52,757.5 1170.59,762.1 1170.66,748.3 1170.72,743.7 1170.79,734.5 1170.86,739.1 1170.92,743.7 1170.99,729.9 1171.06,775.9 1171.12,734.5 1171.19,725.3 1171.26,743.7 1171.33,729.9 1171.39,757.5 1171.46,757.5 1171.53,739.1 1171.59,748.3 1171.66,743.7 1171.73,743.7 1171.79,748.3 1171.86,752.9 1171.93,743.7 1171.99,752.9 1172.06,748.3 1172.13,743.7 1172.19,752.9 1172.26,752.9 1172.33,734.5 1172.39,734.5 1172.46,743.7 1172.53,743.7 1172.59,725.3 1172.66,752.9 1172.73,739.1 1172.79,729.9 1172.86,743.7 1172.93,720.7 1172.99,734.5 1173.06,748.3 1173.13,743.7 1173.19,743.7 1173.26,762.1 1173.33,729.9 1173.39,729.9 1173.46,757.5 1173.53,771.3 1173.59,757.5 1173.66,739.1 1173.73,734.5 1173.79,743.7 1173.86,743.7 1173.93,739.1 1173.99,748.3 1174.06,762.1 1174.13,762.1 1174.20,743.7 1174.26,752.9 1174.33,752.9 1174.40,739.1 1174.46,748.3 1174.53,743.7 1174.60,739.1 1174.66,748.3 1174.73,734.5 1174.80,743.7 1174.86,743.7 1174.93,743.7 1175.00,739.1 1175.06,734.5 1175.13,757.5 1175.20,775.9 1175.26,743.7 1175.33,739.1 1175.40,729.9 1175.46,752.9 1175.53,752.9 1175.60,725.3 1175.66,752.9 1175.73,743.7 1175.80,752.9 1175.86,752.9 1175.93,734.5 1176.00,748.3 1176.06,734.5 1176.13,748.3 1176.20,725.3 1176.26,743.7 1176.33,739.1 1176.40,752.9 1176.46,748.3 1176.53,725.3 1176.60,739.1 1176.66,743.7 1176.73,734.5 1176.80,748.3 1176.87,734.5 1176.93,752.9 1177.00,743.7 1177.07,739.1 1177.13,748.3 1177.20,752.9 1177.27,725.3 1177.33,729.9 1177.40,757.5 1177.47,720.7 1177.53,743.7 1177.60,748.3 1177.67,757.5 1177.73,739.1 1177.80,734.5 1177.87,743.7 1177.93,739.1 1178.00,762.1 1178.07,743.7 1178.13,748.3 1178.20,748.3 1178.27,739.1 1178.33,734.5 1178.40,743.7 1178.47,729.9 1178.53,739.1 1178.60,729.9 1178.67,743.7 1178.73,729.9 1178.80,757.5 1178.87,734.5 1178.93,748.3 1179.00,752.9 1179.07,752.9 1179.13,766.7 1179.20,734.5 1179.27,752.9 1179.34,734.5 1179.40,734.5 1179.47,748.3 1179.54,748.3 1179.60,748.3 1179.67,739.1 1179.74,748.3 1179.80,739.1 1179.87,752.9 1179.94,720.7 1180.00,739.1 1180.07,757.5 1180.14,739.1 1180.20,739.1 1180.27,743.7 1180.34,762.1 1180.40,748.3 1180.47,739.1 1180.54,729.9 1180.60,739.1 1180.67,725.3 1180.74,752.9 1180.80,743.7 1180.87,739.1 1180.94,725.3 1181.00,752.9 1181.07,752.9 1181.14,743.7 1181.20,743.7 1181.27,748.3 1181.34,752.9 1181.40,748.3 1181.47,743.7 1181.54,766.7 1181.60,752.9 1181.67,725.3 1181.74,734.5 1181.80,752.9 1181.87,734.5 1181.94,762.1 1182.01,752.9 1182.07,743.7 1182.14,757.5 1182.21,739.1 1182.27,748.3 1182.34,739.1 1182.41,757.5 1182.47,752.9 1182.54,725.3 1182.61,752.9 1182.67,757.5 1182.74,743.7 1182.81,752.9 1182.87,739.1 1182.94,739.1 1183.01,743.7 1183.07,743.7 1183.14,743.7 1183.21,757.5 1183.27,743.7 1183.34,734.5 1183.41,743.7 1183.47,739.1 1183.54,734.5 1183.61,757.5 1183.67,743.7 1183.74,757.5 1183.81,739.1 1183.87,752.9 1183.94,743.7 1184.01,757.5 1184.07,743.7 1184.14,734.5 1184.21,743.7 1184.27,739.1 1184.34,748.3" fill="none" stroke="#0000ff" stroke-width="1.95" stroke-linejoin="round" clip-path="url(#c4)"/>
<rect x="911.05" y="689.05" width="273.9" height="120.0" fill="none" stroke="#000" stroke-width="1.45"/>
<line x1="911.00" y1="809.05" x2="911.00" y2="815.9499999999999" stroke="#000" stroke-width="1.9"/>
<line x1="977.75" y1="809.05" x2="977.75" y2="815.9499999999999" stroke="#000" stroke-width="1.9"/>
<line x1="1044.50" y1="809.05" x2="1044.50" y2="815.9499999999999" stroke="#000" stroke-width="1.9"/>
<line x1="1111.25" y1="809.05" x2="1111.25" y2="815.9499999999999" stroke="#000" stroke-width="1.9"/>
<line x1="1178.00" y1="809.05" x2="1178.00" y2="815.9499999999999" stroke="#000" stroke-width="1.9"/>
<line x1="904.15" y1="729.90" x2="911.05" y2="729.90" stroke="#000" stroke-width="1.9"/>
<line x1="904.15" y1="775.90" x2="911.05" y2="775.90" stroke="#000" stroke-width="1.9"/>
<rect x="1108.6" y="691.9" width="73.5" height="15.7" rx="2.2" ry="2.2" fill="#fff" fill-opacity="0.8" stroke="#ccc" stroke-width="1.1"/>
<line x1="1111.1999999999998" y1="699.85" x2="1133.8999999999999" y2="699.85" stroke="#0000ff" stroke-width="1.6"/>
<g style="will-change:transform">
<text x="6.2" y="23.2" font-size="16.67">2025-12-14: GIRAFFE</text>
<text x="336" y="23.0" font-size="12.5">type info</text>
<text x="629" y="23.0" font-size="12.5">set-up info</text>
<text x="7.0" y="44.4" font-size="12.5">ORIGFILE:</text>
<text x="75" y="45.5" font-size="12.5">FLAMES_GIRAF_BIAS349_0003.fits</text>
<text x="6.0" y="61.8" font-size="12.5">ARCFILE:</text>
<text x="75" y="61.8" font-size="12.5">GIRAF.2025-12-15T09:35:50.745.fits</text>
<text x="6.0" y="79.7" font-size="12.5">raw_type:</text>
<text x="75" y="79.7" font-size="12.5">BIAS</text>
<text x="7.0" y="96.9" font-size="12.5">do_class:</text>
<text x="75" y="96.3" font-size="12.5">BIAS</text>
<text x="7.0" y="113.6" font-size="12.5">extension:</text>
<text x="76" y="113.6" font-size="12.5">0</text>
<text x="336" y="44.3" font-size="12.5">DPR.CATG:</text>
<text x="405" y="44.3" font-size="12.5">CALIB</text>
<text x="336" y="61.85" font-size="12.5">DPR.TYPE:</text>
<text x="405" y="61.85" font-size="12.5">BIAS</text>
<text x="336" y="79.7" font-size="12.5">DPR.TECH:</text>
<text x="405" y="79.7" font-size="12.5">IMAGE</text>
<text x="336" y="96.75" font-size="12.5">TPL.ID:</text>
<text x="405" y="96.75" font-size="12.5">FLAMES_giraf_cal_bias</text>
<text x="629" y="42.8" font-size="10.42">DET.READ.SPEED:</text>
<text x="759" y="42.8" font-size="10.42">Fast</text>
<text x="6.3" y="863.7" font-size="10.42">powered by QC: www.eso.org/HC</text>
<text x="1239.5" y="863.7" font-size="10.42" text-anchor="end" letter-spacing="0.02">created by qc_rawdisp.py v1.2.3 on 2025-12-15T11:26:30</text>
<text x="311.58" y="832.05" font-size="9.72" text-anchor="middle" letter-spacing="0.18">0</text>
<text x="354.08" y="832.05" font-size="9.72" text-anchor="middle" letter-spacing="0.18">250</text>
<text x="396.58" y="832.05" font-size="9.72" text-anchor="middle" letter-spacing="0.18">500</text>
<text x="439.08" y="832.05" font-size="9.72" text-anchor="middle" letter-spacing="0.18">750</text>
<text x="481.58" y="832.05" font-size="9.72" text-anchor="middle" letter-spacing="0.18">1000</text>
<text x="524.09" y="832.05" font-size="9.72" text-anchor="middle" letter-spacing="0.18">1250</text>
<text x="566.59" y="832.05" font-size="9.72" text-anchor="middle" letter-spacing="0.18">1500</text>
<text x="609.09" y="832.05" font-size="9.72" text-anchor="middle" letter-spacing="0.18">1750</text>
<text x="651.59" y="832.05" font-size="9.72" text-anchor="middle" letter-spacing="0.18">2000</text>
<text x="296.65" y="812.56" font-size="9.72" text-anchor="end" letter-spacing="0.18">0</text>
<text x="296.65" y="727.56" font-size="9.72" text-anchor="end" letter-spacing="0.18">500</text>
<text x="296.65" y="642.56" font-size="9.72" text-anchor="end" letter-spacing="0.18">1000</text>
<text x="296.65" y="557.56" font-size="9.72" text-anchor="end" letter-spacing="0.18">1500</text>
<text x="296.65" y="472.56" font-size="9.72" text-anchor="end" letter-spacing="0.18">2000</text>
<text x="296.65" y="387.56" font-size="9.72" text-anchor="end" letter-spacing="0.18">2500</text>
<text x="296.65" y="302.56" font-size="9.72" text-anchor="end" letter-spacing="0.18">3000</text>
<text x="296.65" y="217.56" font-size="9.72" text-anchor="end" letter-spacing="0.18">3500</text>
<text x="296.65" y="132.56" font-size="9.72" text-anchor="end" letter-spacing="0.18">4000</text>
<text x="494.6" y="850" font-size="10.42" text-anchor="middle">X</text>
<text x="258.9" y="461.0" font-size="10.42" text-anchor="middle" transform="rotate(-90 258.9 461.0)">Y</text>
<text x="762.2" y="149.5" font-size="9.72" letter-spacing="0.18">248.0</text>
<text x="762.2" y="228.3" font-size="9.72" letter-spacing="0.18">247.5</text>
<text x="762.2" y="307.1" font-size="9.72" letter-spacing="0.18">247.0</text>
<text x="762.2" y="385.9" font-size="9.72" letter-spacing="0.18">246.5</text>
<text x="762.2" y="464.7" font-size="9.72" letter-spacing="0.18">246.0</text>
<text x="762.2" y="543.5" font-size="9.72" letter-spacing="0.18">245.5</text>
<text x="762.2" y="622.3" font-size="9.72" letter-spacing="0.18">245.0</text>
<text x="762.2" y="701.1" font-size="9.72" letter-spacing="0.18">244.5</text>
<text x="762.2" y="779.9" font-size="9.72" letter-spacing="0.18">244.0</text>
<text x="934.35" y="255.8" font-size="9.72" text-anchor="middle" letter-spacing="0.18">235</text>
<text x="1040.45" y="255.8" font-size="9.72" text-anchor="middle" letter-spacing="0.18">245</text>
<text x="1145.35" y="255.8" font-size="9.72" text-anchor="middle" letter-spacing="0.18">255</text>
<text x="896.65" y="126.3" font-size="9.72" text-anchor="end" letter-spacing="0.18">6</text>
<text x="896.65" y="170.2" font-size="9.72" text-anchor="end" letter-spacing="0.18">4</text>
<text x="896.65" y="213.5" font-size="9.72" text-anchor="end" letter-spacing="0.18">2</text>
<text x="1048" y="274.3" font-size="10.42" text-anchor="middle">counts</text>
<text x="877.8" y="174" font-size="10.42" text-anchor="middle" transform="rotate(-90 877.8 174)">log frequency</text>
<text x="1193.9" y="174.9" font-size="10.42" text-anchor="middle" transform="rotate(90 1193.9 174.9)">histogram (detail)</text>
<text x="929.85" y="427.9" font-size="9.72" text-anchor="middle" letter-spacing="0.18">0</text>
<text x="1004.4" y="427.9" font-size="9.72" text-anchor="middle" letter-spacing="0.18">20000</text>
<text x="1078.55" y="427.9" font-size="9.72" text-anchor="middle" letter-spacing="0.18">40000</text>
<text x="1153.25" y="427.9" font-size="9.72" text-anchor="middle" letter-spacing="0.18">60000</text>
<text x="896.65" y="310.6" font-size="9.72" text-anchor="end" letter-spacing="0.18">6</text>
<text x="896.65" y="343.4" font-size="9.72" text-anchor="end" letter-spacing="0.18">4</text>
<text x="896.65" y="375.9" font-size="9.72" text-anchor="end" letter-spacing="0.18">2</text>
<text x="896.65" y="408.5" font-size="9.72" text-anchor="end" letter-spacing="0.18">0</text>
<text x="1048" y="446.3" font-size="10.42" text-anchor="middle">counts</text>
<text x="877.8" y="346" font-size="10.42" text-anchor="middle" transform="rotate(-90 877.8 346)">log frequency</text>
<text x="1193.9" y="349" font-size="10.42" text-anchor="middle" transform="rotate(90 1193.9 349)">histogram (full)</text>
<text x="912.45" y="659.95" font-size="9.72" text-anchor="middle" letter-spacing="0.18">0</text>
<text x="975.67" y="659.95" font-size="9.72" text-anchor="middle" letter-spacing="0.18">500</text>
<text x="1038.88" y="659.95" font-size="9.72" text-anchor="middle" letter-spacing="0.18">1000</text>
<text x="1102.1" y="659.95" font-size="9.72" text-anchor="middle" letter-spacing="0.18">1500</text>
<text x="1165.31" y="659.95" font-size="9.72" text-anchor="middle" letter-spacing="0.18">2000</text>
<text x="896.65" y="560.7" font-size="9.72" text-anchor="end" letter-spacing="0.18">250</text>
<text x="896.65" y="606.4" font-size="9.72" text-anchor="end" letter-spacing="0.18">240</text>
<text x="1048" y="678" font-size="10.42" text-anchor="middle">X</text>
<text x="866" y="577.8" font-size="10.42" text-anchor="middle" transform="rotate(-90 866 577.8)">counts</text>
<text x="1193.9" y="575.8" font-size="10.42" text-anchor="middle" transform="rotate(90 1193.9 575.8)">cut in x</text>
<text x="1136.8999999999999" y="531.35" font-size="9.72" letter-spacing="0.18">y=2048</text>
<text x="911.45" y="831.95" font-size="9.72" text-anchor="middle" letter-spacing="0.18">0</text>
<text x="978.2" y="831.95" font-size="9.72" text-anchor="middle" letter-spacing="0.18">1000</text>
<text x="1044.95" y="831.95" font-size="9.72" text-anchor="middle" letter-spacing="0.18">2000</text>
<text x="1111.7" y="831.95" font-size="9.72" text-anchor="middle" letter-spacing="0.18">3000</text>
<text x="1178.45" y="831.95" font-size="9.72" text-anchor="middle" letter-spacing="0.18">4000</text>
<text x="896.65" y="733.5" font-size="9.72" text-anchor="end" letter-spacing="0.18">250</text>
<text x="896.65" y="779.5" font-size="9.72" text-anchor="end" letter-spacing="0.18">240</text>
<text x="1049.3" y="850" font-size="10.42" text-anchor="middle">Y</text>
<text x="866" y="751.5" font-size="10.42" text-anchor="middle" transform="rotate(-90 866 751.5)">counts</text>
<text x="1193.9" y="750.3" font-size="10.42" text-anchor="middle" transform="rotate(90 1193.9 750.3)">cut in y</text>
<text x="1136.8999999999999" y="703.35" font-size="9.72" letter-spacing="0.18">x=1074</text>
</g>
</svg>
</body></html>
